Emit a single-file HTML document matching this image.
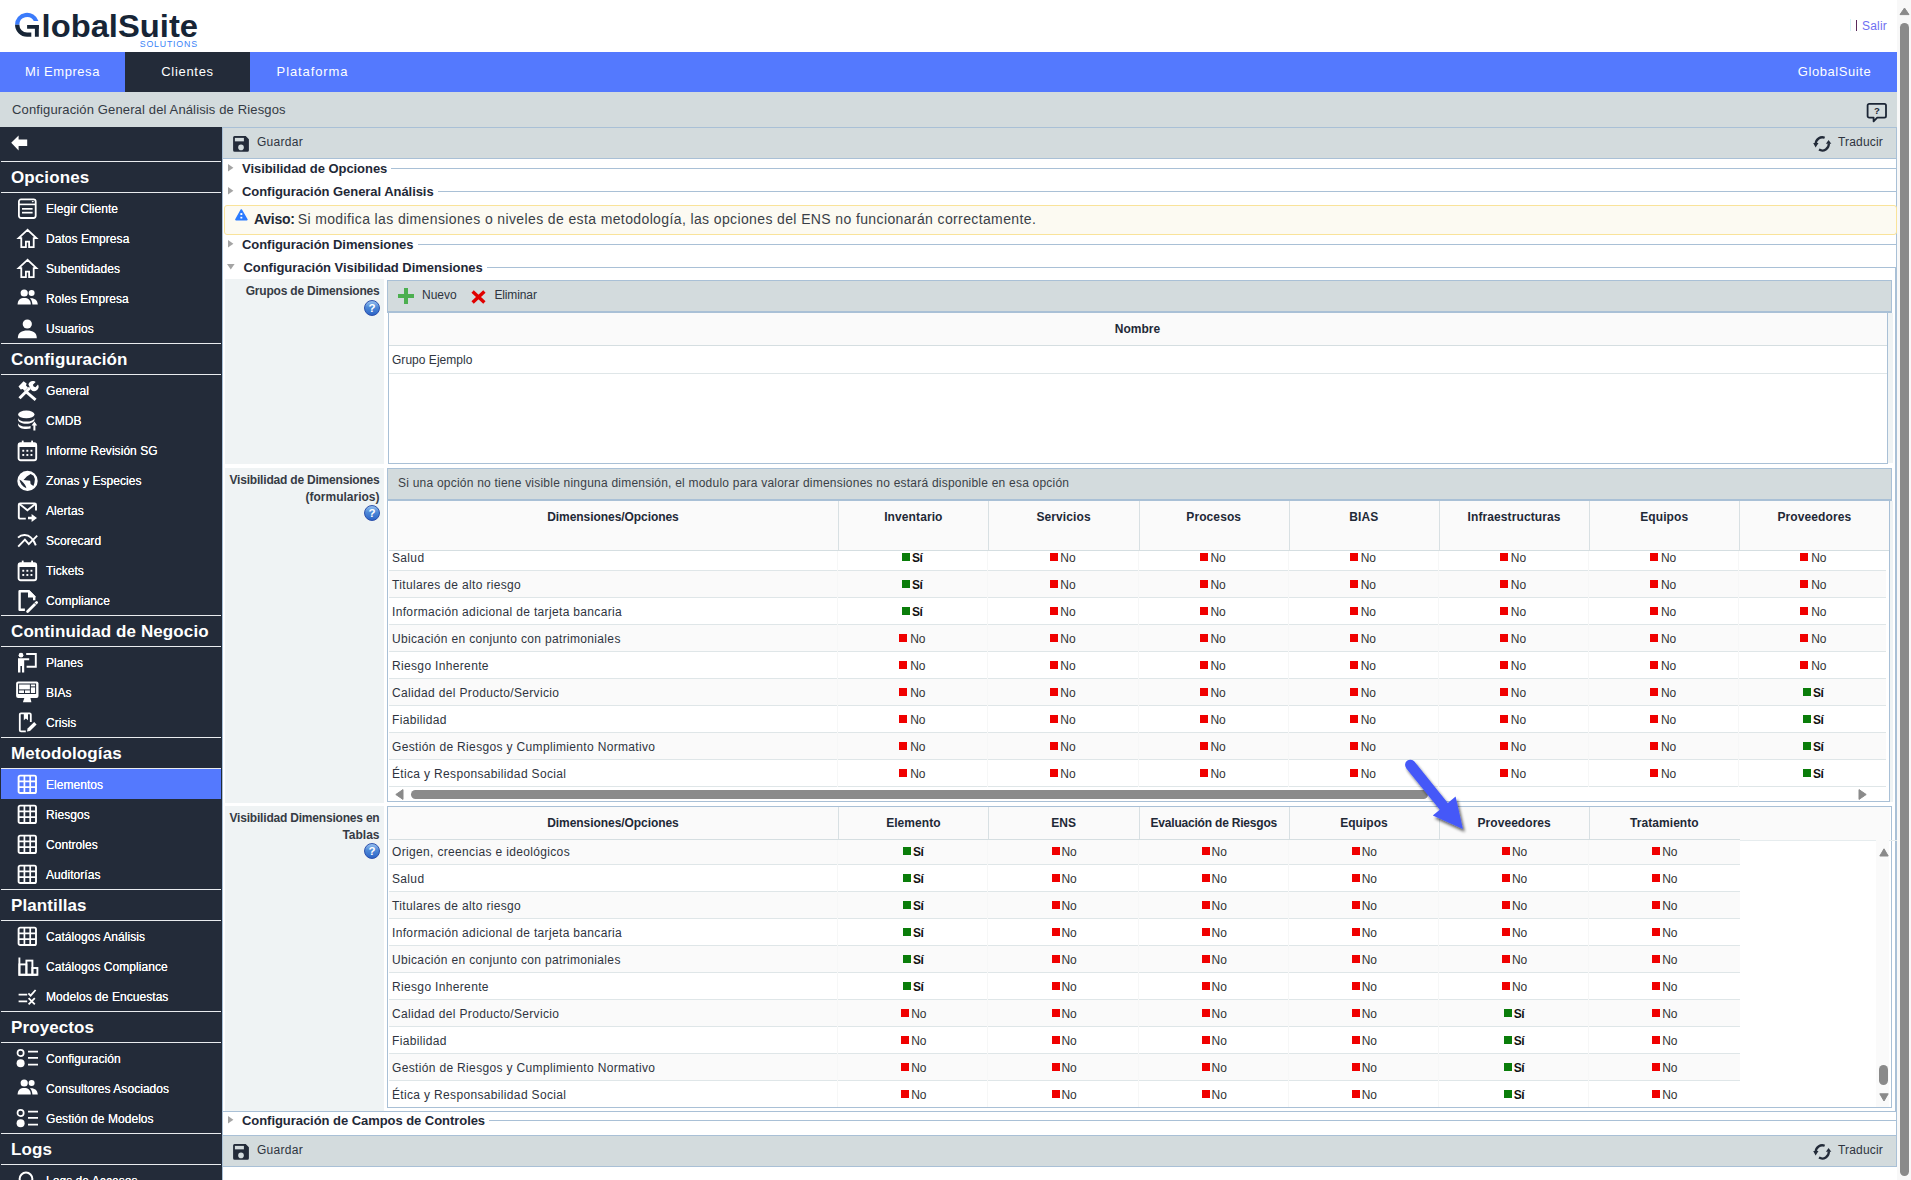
<!DOCTYPE html>
<html><head><meta charset="utf-8">
<style>
*{box-sizing:border-box;margin:0;padding:0}
html,body{width:1911px;height:1180px;overflow:hidden;background:#fff;font-family:"Liberation Sans",sans-serif}
.t{position:absolute;white-space:nowrap}
.r{position:absolute}
svg{position:absolute;overflow:visible}
</style></head><body>

<div class="r" style="left:0px;top:0px;width:1897px;height:52px;background:#fff;"></div>
<svg style="left:0;top:0" width="210" height="52" viewBox="0 0 210 52">
<path d="M15.04 24.75 A12 12 0 0 1 38.47 21.1 L33.82 21.1 A7.7 7.7 0 0 0 19.34 24.75 Z" fill="#3b7bfb"/>
<path d="M15.04 24.75 A12 12 0 0 0 27.04 36.75 L31.3 36.75 L31.3 32.45 L27.04 32.45 A7.7 7.7 0 0 1 19.34 24.75 Z" fill="#172536"/>
<rect x="27.1" y="25" width="11.7" height="3.75" fill="#172536"/>
<rect x="34.9" y="25" width="3.9" height="11.75" fill="#172536"/>
<text x="41.6" y="36.8" font-family="Liberation Sans" font-weight="bold" font-size="31" fill="#172536" textLength="156.4" lengthAdjust="spacingAndGlyphs">lobalSuite</text>
<text x="139.8" y="47.1" font-family="Liberation Sans" font-size="8.8" fill="#3a83f7" textLength="57.2" lengthAdjust="spacing">SOLUTIONS</text>
</svg>
<div class="r" style="left:1850px;top:19px;width:1px;height:12px;background:#d8f3f8;"></div>
<div class="r" style="left:1855.5px;top:19.5px;width:1.5px;height:11px;background:#5a2a5a;"></div>
<div class="t" style="left:1862.00px;top:18.14px;font-size:12px;line-height:16px;color:#6f6ff2;letter-spacing:0.2px;">Salir</div>
<div class="r" style="left:0px;top:52px;width:1897px;height:40px;background:#5479fe;"></div>
<div class="r" style="left:125px;top:52px;width:125px;height:40px;background:#232b39;"></div>
<div class="t" style="left:0.00px;top:63.00px;font-size:13px;line-height:17px;color:#fff;letter-spacing:0.56px;width:125px;text-align:center;">Mi Empresa</div>
<div class="t" style="left:125.00px;top:63.00px;font-size:13px;line-height:17px;color:#fff;letter-spacing:0.69px;width:125px;text-align:center;">Clientes</div>
<div class="t" style="left:250.00px;top:63.00px;font-size:13px;line-height:17px;color:#fff;letter-spacing:0.9px;width:125px;text-align:center;">Plataforma</div>
<div class="t" style="left:1797.80px;top:63.00px;font-size:13px;line-height:17px;color:#fff;letter-spacing:0.57px;">GlobalSuite</div>
<div class="r" style="left:0px;top:92px;width:1897px;height:35px;background:#d3dbdd;"></div>
<div class="t" style="left:12.00px;top:100.70px;font-size:13px;line-height:17px;color:#333a44;letter-spacing:0.14px;">Configuración General del Análisis de Riesgos</div>
<svg style="left:1866px;top:102px" width="21" height="21" viewBox="0 0 21 21">
<path d="M3.2 1.8h15.2a1.6 1.6 0 0 1 1.6 1.6v10.6a1.6 1.6 0 0 1-1.6 1.6h-7.2l-3.6 3.8v-3.8h-4.4a1.6 1.6 0 0 1-1.6-1.6v-10.6a1.6 1.6 0 0 1 1.6-1.6z" fill="none" stroke="#1b2535" stroke-width="1.8" stroke-linejoin="round"/>
<text x="10.8" y="12.3" font-family="Liberation Sans" font-weight="bold" font-size="9.5" fill="#1b2535" text-anchor="middle">?</text>
</svg>
<div class="r" style="left:0px;top:127px;width:222px;height:1053px;background:#232b39;"></div>
<svg style="left:11px;top:135px" width="17" height="16" viewBox="0 0 17 16"><path d="M0.2 7.8 L7.6 0.4 V4.6 H16.2 V11 H7.6 V15.4 Z" fill="#fff"/></svg>
<div class="r" style="left:1px;top:161px;width:220px;height:1px;background:#e9ecef;"></div>
<div class="t" style="left:11.00px;top:166.71px;font-size:17px;line-height:21px;color:#fff;font-weight:bold;letter-spacing:0.1px;">Opciones</div>
<div class="r" style="left:1px;top:192px;width:220px;height:1px;background:#e9ecef;"></div>
<svg style="left:17px;top:197.5px" width="21" height="21" viewBox="0 0 21 21"><rect x="1.9" y="1.4" width="16.8" height="18.6" rx="2.2" fill="none" stroke="#fff" stroke-width="1.8"/><rect x="2" y="5.6" width="16.6" height="1.6" fill="#fff"/><path d="M14.6 3.1h2.4l-1.2 1.3z" fill="#fff"/><rect x="5" y="10" width="10.6" height="1.7" fill="#fff"/><rect x="5" y="13.8" width="10.6" height="1.7" fill="#fff"/></svg>
<div class="t" style="left:46.00px;top:200.84px;font-size:12px;line-height:16px;color:#fff;letter-spacing:0.05px;text-shadow:0 0 0.3px #fff;">Elegir Cliente</div>
<svg style="left:17px;top:227.5px" width="21" height="21" viewBox="0 0 21 21"><path d="M10.5 1.8 L1.6 10.2 H4.3 V19.2 H8.9 V13.6 H12.1 V19.2 H16.7 V10.2 H19.4 Z" fill="none" stroke="#fff" stroke-width="1.8" stroke-linejoin="miter"/></svg>
<div class="t" style="left:46.00px;top:230.84px;font-size:12px;line-height:16px;color:#fff;letter-spacing:0.05px;text-shadow:0 0 0.3px #fff;">Datos Empresa</div>
<svg style="left:17px;top:257.5px" width="21" height="21" viewBox="0 0 21 21"><path d="M10.5 1.8 L1.6 10.2 H4.3 V19.2 H8.9 V13.6 H12.1 V19.2 H16.7 V10.2 H19.4 Z" fill="none" stroke="#fff" stroke-width="1.8" stroke-linejoin="miter"/></svg>
<div class="t" style="left:46.00px;top:260.84px;font-size:12px;line-height:16px;color:#fff;letter-spacing:0.05px;text-shadow:0 0 0.3px #fff;">Subentidades</div>
<svg style="left:17px;top:287.5px" width="21" height="21" viewBox="0 0 21 21"><circle cx="7.2" cy="5" r="3.6" fill="#fff"/><circle cx="14.6" cy="5" r="3" fill="#fff"/><path d="M0.6 16.6 C0.6 11.8 3.4 10 7.2 10 C11 10 13.8 11.8 13.8 16.6 Z" fill="#fff"/><path d="M12.8 10.3 C17.4 9.8 20.6 12 20.8 16.6 H15.4 C15.2 13.6 14.4 11.6 12.8 10.3 Z" fill="#fff"/></svg>
<div class="t" style="left:46.00px;top:290.84px;font-size:12px;line-height:16px;color:#fff;letter-spacing:0.05px;text-shadow:0 0 0.3px #fff;">Roles Empresa</div>
<svg style="left:17px;top:317.5px" width="21" height="21" viewBox="0 0 21 21"><circle cx="10.3" cy="6" r="4.6" fill="#fff"/><path d="M0.8 20.2 C0.8 14.6 4.8 12.6 10.3 12.6 C15.8 12.6 19.8 14.6 19.8 20.2 Z" fill="#fff"/></svg>
<div class="t" style="left:46.00px;top:320.84px;font-size:12px;line-height:16px;color:#fff;letter-spacing:0.05px;text-shadow:0 0 0.3px #fff;">Usuarios</div>
<div class="r" style="left:1px;top:343px;width:220px;height:1px;background:#e9ecef;"></div>
<div class="t" style="left:11.00px;top:348.71px;font-size:17px;line-height:21px;color:#fff;font-weight:bold;letter-spacing:0.1px;">Configuración</div>
<div class="r" style="left:1px;top:374px;width:220px;height:1px;background:#e9ecef;"></div>
<svg style="left:17px;top:379.5px" width="21" height="21" viewBox="0 0 21 21"><path d="M2.5 18.2 L13 7.7" stroke="#fff" stroke-width="3"/><path d="M11.4 4.4 A4.4 4.4 0 0 1 18.6 2 L15.9 4.7 L16.6 6.6 L18.5 7.3 L21 4.6 A4.4 4.4 0 0 1 14 9.8 Z" fill="#fff"/><path d="M8.6 11.4 L18.6 19.8" stroke="#fff" stroke-width="2.9"/><path d="M1.5 6.4 L6.6 1.3 L9.6 3.4 L9 5.6 L11 7.5 L7.6 10.9 L5.8 9 L3.7 9.6 Z" fill="#fff"/></svg>
<div class="t" style="left:46.00px;top:382.84px;font-size:12px;line-height:16px;color:#fff;letter-spacing:0.05px;text-shadow:0 0 0.3px #fff;">General</div>
<svg style="left:17px;top:409.5px" width="21" height="21" viewBox="0 0 21 21"><ellipse cx="9.3" cy="4.4" rx="8.2" ry="3.9" fill="#fff"/><path d="M1.1 7.4 C1.1 10 4.8 11.6 9.3 11.6 C13.8 11.6 17.5 10 17.5 7.4 V9.6 C17.5 12.2 13.8 13.8 9.3 13.8 C4.8 13.8 1.1 12.2 1.1 9.6 Z" fill="#fff"/><path d="M1.1 12.4 C1.1 15 4.8 16.6 9.3 16.6 C11 16.6 12.4 16.4 13.6 16 L13.6 18.6 C12.4 18.9 10.9 19.1 9.3 19.1 C4.8 19.1 1.1 17.4 1.1 14.8 Z" fill="#fff"/><path d="M17.4 11.6 L20.2 15.4 H18.4 V20.4 H16.4 V15.4 H14.6 Z" fill="#fff"/></svg>
<div class="t" style="left:46.00px;top:412.84px;font-size:12px;line-height:16px;color:#fff;letter-spacing:0.05px;text-shadow:0 0 0.3px #fff;">CMDB</div>
<svg style="left:17px;top:439.5px" width="21" height="21" viewBox="0 0 21 21"><rect x="1.6" y="3.2" width="17.6" height="17" rx="2" fill="none" stroke="#fff" stroke-width="1.9"/><rect x="1.6" y="3.2" width="17.6" height="3.8" fill="#fff"/><rect x="4.8" y="0.6" width="1.8" height="3.4" fill="#fff"/><rect x="14.2" y="0.6" width="1.8" height="3.4" fill="#fff"/><g fill="#fff"><rect x="5.3" y="9.8" width="1.9" height="1.9"/><rect x="9.4" y="9.8" width="1.9" height="1.9"/><rect x="13.5" y="9.8" width="1.9" height="1.9"/><rect x="5.3" y="14" width="1.9" height="1.9"/><rect x="9.4" y="14" width="1.9" height="1.9"/><rect x="13.5" y="14" width="1.9" height="1.9"/></g></svg>
<div class="t" style="left:46.00px;top:442.84px;font-size:12px;line-height:16px;color:#fff;letter-spacing:0.05px;text-shadow:0 0 0.3px #fff;">Informe Revisión SG</div>
<svg style="left:17px;top:469.5px" width="21" height="21" viewBox="0 0 21 21"><circle cx="10.5" cy="10.9" r="10.2" fill="#fff"/><path d="M6.5 9.9 L9.8 6.5 L13.6 3.9 L16.6 5.8 L17.9 9 L17.4 13 L16.4 16 L13.6 14.1 L13.2 10.8 Z" fill="#232b39"/><path d="M2.4 9.4 C3.2 13.2 5.4 16.4 9.4 18.2 L8.8 16.2 C7.4 13.4 5.2 11 2.4 9.4 Z" fill="#232b39"/></svg>
<div class="t" style="left:46.00px;top:472.84px;font-size:12px;line-height:16px;color:#fff;letter-spacing:0.05px;text-shadow:0 0 0.3px #fff;">Zonas y Especies</div>
<svg style="left:17px;top:499.5px" width="21" height="21" viewBox="0 0 21 21"><path d="M8.8 18.6 H3.2 Q1.8 18.6 1.8 17.2 V4.8 Q1.8 3.4 3.2 3.4 H17.6 Q19 3.4 19 4.8 V10.4" fill="none" stroke="#fff" stroke-width="1.9"/><path d="M2.2 3.8 L10.4 10.2 L18.6 3.8" fill="none" stroke="#fff" stroke-width="1.9"/><path d="M11 16.7 H14.6 V14 L20 18 L14.6 22 V19.3 H11 Z" fill="#fff"/></svg>
<div class="t" style="left:46.00px;top:502.84px;font-size:12px;line-height:16px;color:#fff;letter-spacing:0.05px;text-shadow:0 0 0.3px #fff;">Alertas</div>
<svg style="left:17px;top:529.5px" width="21" height="21" viewBox="0 0 21 21"><path d="M1 7.6 C4.4 4.4 10.4 4 14 7.6 C16.6 10 17.8 12.6 18.8 15.4" fill="none" stroke="#fff" stroke-width="1.9"/><path d="M1.2 16.6 L7.9 9.6 L11.8 14.2 L20.2 5.6" fill="none" stroke="#fff" stroke-width="1.9"/></svg>
<div class="t" style="left:46.00px;top:532.84px;font-size:12px;line-height:16px;color:#fff;letter-spacing:0.05px;text-shadow:0 0 0.3px #fff;">Scorecard</div>
<svg style="left:17px;top:559.5px" width="21" height="21" viewBox="0 0 21 21"><rect x="1.6" y="3.2" width="17.6" height="17" rx="2" fill="none" stroke="#fff" stroke-width="1.9"/><rect x="1.6" y="3.2" width="17.6" height="3.8" fill="#fff"/><rect x="4.8" y="0.6" width="1.8" height="3.4" fill="#fff"/><rect x="14.2" y="0.6" width="1.8" height="3.4" fill="#fff"/><g fill="#fff"><rect x="5.3" y="9.8" width="1.9" height="1.9"/><rect x="9.4" y="9.8" width="1.9" height="1.9"/><rect x="13.5" y="9.8" width="1.9" height="1.9"/><rect x="5.3" y="14" width="1.9" height="1.9"/><rect x="9.4" y="14" width="1.9" height="1.9"/><rect x="13.5" y="14" width="1.9" height="1.9"/></g></svg>
<div class="t" style="left:46.00px;top:562.84px;font-size:12px;line-height:16px;color:#fff;letter-spacing:0.05px;text-shadow:0 0 0.3px #fff;">Tickets</div>
<svg style="left:17px;top:589.5px" width="21" height="21" viewBox="0 0 21 21"><path d="M7.9 19.7 H2.6 V1.3 H11.7 L17.2 6.8 V10.3" fill="none" stroke="#fff" stroke-width="2.4" stroke-linejoin="round"/><path d="M11 0.1 H12.2 L18.4 6.3 V7.6 H11 Z" fill="#fff"/><path d="M10.6 21.4 L19.6 12.4" stroke="#fff" stroke-width="2.8" stroke-linecap="round"/><path d="M17 12.4 L19.4 14.8" stroke="#232b39" stroke-width="0.8"/></svg>
<div class="t" style="left:46.00px;top:592.84px;font-size:12px;line-height:16px;color:#fff;letter-spacing:0.05px;text-shadow:0 0 0.3px #fff;">Compliance</div>
<div class="r" style="left:1px;top:615px;width:220px;height:1px;background:#e9ecef;"></div>
<div class="t" style="left:11.00px;top:620.71px;font-size:17px;line-height:21px;color:#fff;font-weight:bold;letter-spacing:0.1px;">Continuidad de Negocio</div>
<div class="r" style="left:1px;top:646px;width:220px;height:1px;background:#e9ecef;"></div>
<svg style="left:17px;top:651.5px" width="21" height="21" viewBox="0 0 21 21"><circle cx="4" cy="3.2" r="2.4" fill="#fff"/><path d="M1 6.2 H12.2 V8.2 H7.2 V20.4 H5 V14 H3.4 V20.4 H1 Z" fill="#fff"/><path d="M9.2 2 H18.8 V14.8 H9.6" fill="none" stroke="#fff" stroke-width="1.9"/></svg>
<div class="t" style="left:46.00px;top:654.84px;font-size:12px;line-height:16px;color:#fff;letter-spacing:0.05px;text-shadow:0 0 0.3px #fff;">Planes</div>
<svg style="left:17px;top:681.5px" width="21" height="21" viewBox="0 0 21 21"><rect x="-0.9" y="-0.4" width="22.4" height="16.4" rx="2" fill="#fff"/><rect x="1.6" y="2" width="17" height="9.5" fill="none" stroke="#232b39" stroke-width="1"/><path d="M13.4 2 V11.5 M1.6 7.9 H13.4 M7.5 7.9 V11.5 M13.4 4.9 H18.6" stroke="#232b39" stroke-width="1"/><path d="M7.4 15.8 H13.4 L14.4 20.3 H5.9 Z" fill="#fff"/></svg>
<div class="t" style="left:46.00px;top:684.84px;font-size:12px;line-height:16px;color:#fff;letter-spacing:0.05px;text-shadow:0 0 0.3px #fff;">BIAs</div>
<svg style="left:17px;top:711.5px" width="21" height="21" viewBox="0 0 21 21"><path d="M8.8 19.4 H4 C3.2 19.4 2.8 19 2.8 18.2 V2.6 C2.8 1.8 3.2 1.4 4 1.4 H12.6 C13.4 1.4 13.8 1.8 13.8 2.6 V10" fill="none" stroke="#fff" stroke-width="1.8"/><path d="M6.8 1.6 H11 V8.2 L8.9 6.4 L6.8 8.2 Z" fill="#fff"/><path d="M10 19.6 L10.6 16.6 L17.2 10 L19.6 12.4 L13 19 Z" fill="#fff"/></svg>
<div class="t" style="left:46.00px;top:714.84px;font-size:12px;line-height:16px;color:#fff;letter-spacing:0.05px;text-shadow:0 0 0.3px #fff;">Crisis</div>
<div class="r" style="left:1px;top:737px;width:220px;height:1px;background:#e9ecef;"></div>
<div class="t" style="left:11.00px;top:742.71px;font-size:17px;line-height:21px;color:#fff;font-weight:bold;letter-spacing:0.1px;">Metodologías</div>
<div class="r" style="left:1px;top:768px;width:220px;height:1px;background:#e9ecef;"></div>
<div class="r" style="left:1px;top:769px;width:220px;height:30px;background:#5479fe;"></div>
<svg style="left:17px;top:773.5px" width="21" height="21" viewBox="0 0 21 21"><rect x="1.6" y="1.6" width="17.4" height="17.4" rx="1.6" fill="none" stroke="#fff" stroke-width="1.9"/><path d="M1.6 7.4 H19 M1.6 13.2 H19 M7.4 1.6 V19 M13.2 1.6 V19" stroke="#fff" stroke-width="1.7"/></svg>
<div class="t" style="left:46.00px;top:776.84px;font-size:12px;line-height:16px;color:#fff;letter-spacing:0.05px;text-shadow:0 0 0.3px #fff;">Elementos</div>
<svg style="left:17px;top:803.5px" width="21" height="21" viewBox="0 0 21 21"><rect x="1.6" y="1.6" width="17.4" height="17.4" rx="1.6" fill="none" stroke="#fff" stroke-width="1.9"/><path d="M1.6 7.4 H19 M1.6 13.2 H19 M7.4 1.6 V19 M13.2 1.6 V19" stroke="#fff" stroke-width="1.7"/></svg>
<div class="t" style="left:46.00px;top:806.84px;font-size:12px;line-height:16px;color:#fff;letter-spacing:0.05px;text-shadow:0 0 0.3px #fff;">Riesgos</div>
<svg style="left:17px;top:833.5px" width="21" height="21" viewBox="0 0 21 21"><rect x="1.6" y="1.6" width="17.4" height="17.4" rx="1.6" fill="none" stroke="#fff" stroke-width="1.9"/><path d="M1.6 7.4 H19 M1.6 13.2 H19 M7.4 1.6 V19 M13.2 1.6 V19" stroke="#fff" stroke-width="1.7"/></svg>
<div class="t" style="left:46.00px;top:836.84px;font-size:12px;line-height:16px;color:#fff;letter-spacing:0.05px;text-shadow:0 0 0.3px #fff;">Controles</div>
<svg style="left:17px;top:863.5px" width="21" height="21" viewBox="0 0 21 21"><rect x="1.6" y="1.6" width="17.4" height="17.4" rx="1.6" fill="none" stroke="#fff" stroke-width="1.9"/><path d="M1.6 7.4 H19 M1.6 13.2 H19 M7.4 1.6 V19 M13.2 1.6 V19" stroke="#fff" stroke-width="1.7"/></svg>
<div class="t" style="left:46.00px;top:866.84px;font-size:12px;line-height:16px;color:#fff;letter-spacing:0.05px;text-shadow:0 0 0.3px #fff;">Auditorías</div>
<div class="r" style="left:1px;top:889px;width:220px;height:1px;background:#e9ecef;"></div>
<div class="t" style="left:11.00px;top:894.71px;font-size:17px;line-height:21px;color:#fff;font-weight:bold;letter-spacing:0.1px;">Plantillas</div>
<div class="r" style="left:1px;top:920px;width:220px;height:1px;background:#e9ecef;"></div>
<svg style="left:17px;top:925.5px" width="21" height="21" viewBox="0 0 21 21"><rect x="1.6" y="1.6" width="17.4" height="17.4" rx="1.6" fill="none" stroke="#fff" stroke-width="1.9"/><path d="M1.6 7.4 H19 M1.6 13.2 H19 M7.4 1.6 V19 M13.2 1.6 V19" stroke="#fff" stroke-width="1.7"/></svg>
<div class="t" style="left:46.00px;top:928.84px;font-size:12px;line-height:16px;color:#fff;letter-spacing:0.05px;text-shadow:0 0 0.3px #fff;">Catálogos Análisis</div>
<svg style="left:17px;top:955.5px" width="21" height="21" viewBox="0 0 21 21"><path d="M2.4 1.6 V18.8 H20.4" fill="none" stroke="#fff" stroke-width="1.9"/><rect x="2.4" y="8.4" width="7" height="10.4" fill="none" stroke="#fff" stroke-width="1.9"/><rect x="9.4" y="4.6" width="6" height="14.2" fill="none" stroke="#fff" stroke-width="1.9"/><rect x="15.4" y="12" width="5" height="6.8" fill="none" stroke="#fff" stroke-width="1.9"/></svg>
<div class="t" style="left:46.00px;top:958.84px;font-size:12px;line-height:16px;color:#fff;letter-spacing:0.05px;text-shadow:0 0 0.3px #fff;">Catálogos Compliance</div>
<svg style="left:17px;top:985.5px" width="21" height="21" viewBox="0 0 21 21"><path d="M1.6 8.6 H10.2 M1.6 15.4 H10.2" stroke="#fff" stroke-width="1.8"/><path d="M11.4 7.4 L13.6 9.6 L18.6 4" fill="none" stroke="#fff" stroke-width="1.8"/><path d="M11.6 12.2 L17.8 18.4 M17.8 12.2 L11.6 18.4" stroke="#fff" stroke-width="1.8"/></svg>
<div class="t" style="left:46.00px;top:988.84px;font-size:12px;line-height:16px;color:#fff;letter-spacing:0.05px;text-shadow:0 0 0.3px #fff;">Modelos de Encuestas</div>
<div class="r" style="left:1px;top:1011px;width:220px;height:1px;background:#e9ecef;"></div>
<div class="t" style="left:11.00px;top:1016.71px;font-size:17px;line-height:21px;color:#fff;font-weight:bold;letter-spacing:0.1px;">Proyectos</div>
<div class="r" style="left:1px;top:1042px;width:220px;height:1px;background:#e9ecef;"></div>
<svg style="left:17px;top:1047.5px" width="21" height="21" viewBox="0 0 21 21"><circle cx="3.6" cy="5" r="3.1" fill="none" stroke="#fff" stroke-width="1.7"/><circle cx="3.6" cy="15.3" r="4" fill="#fff"/><path d="M11 3.6 H21 M11 9.9 H21 M11 16.6 H21" stroke="#fff" stroke-width="1.6"/></svg>
<div class="t" style="left:46.00px;top:1050.84px;font-size:12px;line-height:16px;color:#fff;letter-spacing:0.05px;text-shadow:0 0 0.3px #fff;">Configuración</div>
<svg style="left:17px;top:1077.5px" width="21" height="21" viewBox="0 0 21 21"><circle cx="7.2" cy="5" r="3.6" fill="#fff"/><circle cx="14.6" cy="5" r="3" fill="#fff"/><path d="M0.6 16.6 C0.6 11.8 3.4 10 7.2 10 C11 10 13.8 11.8 13.8 16.6 Z" fill="#fff"/><path d="M12.8 10.3 C17.4 9.8 20.6 12 20.8 16.6 H15.4 C15.2 13.6 14.4 11.6 12.8 10.3 Z" fill="#fff"/></svg>
<div class="t" style="left:46.00px;top:1080.84px;font-size:12px;line-height:16px;color:#fff;letter-spacing:0.05px;text-shadow:0 0 0.3px #fff;">Consultores Asociados</div>
<svg style="left:17px;top:1107.5px" width="21" height="21" viewBox="0 0 21 21"><circle cx="3.6" cy="5" r="3.1" fill="none" stroke="#fff" stroke-width="1.7"/><circle cx="3.6" cy="15.3" r="4" fill="#fff"/><path d="M11 3.6 H21 M11 9.9 H21 M11 16.6 H21" stroke="#fff" stroke-width="1.6"/></svg>
<div class="t" style="left:46.00px;top:1110.84px;font-size:12px;line-height:16px;color:#fff;letter-spacing:0.05px;text-shadow:0 0 0.3px #fff;">Gestión de Modelos</div>
<div class="r" style="left:1px;top:1133px;width:220px;height:1px;background:#e9ecef;"></div>
<div class="t" style="left:11.00px;top:1138.71px;font-size:17px;line-height:21px;color:#fff;font-weight:bold;letter-spacing:0.1px;">Logs</div>
<div class="r" style="left:1px;top:1164px;width:220px;height:1px;background:#e9ecef;"></div>
<svg style="left:17px;top:1169.5px" width="21" height="21" viewBox="0 0 21 21"><circle cx="9" cy="9" r="6.4" fill="none" stroke="#fff" stroke-width="2"/></svg>
<div class="t" style="left:46.00px;top:1172.84px;font-size:12px;line-height:16px;color:#fff;letter-spacing:0.05px;text-shadow:0 0 0.3px #fff;">Logs de Accesos</div>
<div class="r" style="left:222px;top:127px;width:1675px;height:1053px;background:#fff;"></div>
<div class="r" style="left:222px;top:127px;width:1px;height:1053px;background:#a9c0d6;"></div>
<div class="r" style="left:1896px;top:159px;width:1px;height:976px;background:#a9c0d6;"></div>
<div class="r" style="left:222px;top:127px;width:1675px;height:32px;background:#d3dbdd;border-top:1px solid #a9c0d6;border-bottom:1px solid #a9c0d6;border-right:1px solid #a9c0d6;border-left:1px solid #a9c0d6;"></div>
<svg style="left:233px;top:136px" width="17" height="17" viewBox="0 0 17 17"><path d="M1.5 0.1 H12.7 L15.9 3.2 V14.3 A1.5 1.5 0 0 1 14.4 15.8 H1.6 A1.5 1.5 0 0 1 0.1 14.3 V1.6 A1.5 1.5 0 0 1 1.5 0.1 Z" fill="#232b39"/><rect x="1.9" y="1.9" width="9" height="3.45" fill="#d3dbdd"/><circle cx="8" cy="11.4" r="2.8" fill="#d3dbdd"/></svg>
<div class="t" style="left:257.00px;top:134.04px;font-size:12px;line-height:16px;color:#2e3440;letter-spacing:0.28px;">Guardar</div>
<svg style="left:1813px;top:135.5px" width="19" height="16" viewBox="0 0 19 16"><path d="M2.7 7.9 A6.6 6.6 0 0 1 11.67 1.74" fill="none" stroke="#232b39" stroke-width="2.3"/><path d="M0.2 7.1 L5.5 7.1 L2.6 11.6 Z" fill="#232b39"/><path d="M6.0 13.6 A6.6 6.6 0 0 0 15.85 7.4" fill="none" stroke="#232b39" stroke-width="2.3"/><path d="M12.9 7.8 L18.3 7.8 L15.6 3.9 Z" fill="#232b39"/></svg>
<div class="t" style="left:1838.00px;top:134.04px;font-size:12px;line-height:16px;color:#2e3440;letter-spacing:0.18px;">Traducir</div>
<div class="r" style="left:223px;top:168px;width:1674px;height:1px;background:#a9c0d6;"></div>
<div class="r" style="left:223px;top:161px;width:168px;height:15px;background:#fff;"></div>
<svg style="left:228px;top:164px" width="6" height="8" viewBox="0 0 6 8"><path d="M0 0 V7.6 L5.4 3.8 Z" fill="#a4a4a4"/></svg>
<div class="t" style="left:242.00px;top:160.00px;font-size:13px;line-height:17px;color:#1f2937;font-weight:bold;letter-spacing:-0.05px;">Visibilidad de Opciones</div>
<div class="r" style="left:223px;top:191px;width:1674px;height:1px;background:#a9c0d6;"></div>
<div class="r" style="left:223px;top:184px;width:215px;height:15px;background:#fff;"></div>
<svg style="left:228px;top:187px" width="6" height="8" viewBox="0 0 6 8"><path d="M0 0 V7.6 L5.4 3.8 Z" fill="#a4a4a4"/></svg>
<div class="t" style="left:242.00px;top:183.00px;font-size:13px;line-height:17px;color:#1f2937;font-weight:bold;letter-spacing:-0.05px;">Configuración General Análisis</div>
<div class="r" style="left:223.5px;top:205px;width:1673px;height:29.5px;background:#fcfaf2;border:1px solid #f9e39a;border-radius:3px;"></div>
<svg style="left:234.5px;top:209px" width="13" height="12" viewBox="0 0 13 12"><path d="M6.3 1 L11.9 10.6 H0.9 Z" fill="#2b7bff" stroke="#2b7bff" stroke-width="1.6" stroke-linejoin="round"/><rect x="5.4" y="4.1" width="1.9" height="1.9" fill="#fff"/><rect x="5.4" y="7.8" width="1.9" height="1.7" fill="#fff"/></svg>
<div class="t" style="left:254.00px;top:210.15px;font-size:14px;line-height:18px;color:#1f2937;font-weight:bold;letter-spacing:-0.27px;">Aviso:</div>
<div class="t" style="left:297.70px;top:210.15px;font-size:14px;line-height:18px;color:#3a3f47;letter-spacing:0.378px;">Si modifica las dimensiones o niveles de esta metodología, las opciones del ENS no funcionarán correctamente.</div>
<div class="r" style="left:223px;top:244px;width:1674px;height:1px;background:#a9c0d6;"></div>
<div class="r" style="left:223px;top:237px;width:195px;height:15px;background:#fff;"></div>
<svg style="left:228px;top:240px" width="6" height="8" viewBox="0 0 6 8"><path d="M0 0 V7.6 L5.4 3.8 Z" fill="#a4a4a4"/></svg>
<div class="t" style="left:242.00px;top:236.00px;font-size:13px;line-height:17px;color:#1f2937;font-weight:bold;letter-spacing:-0.05px;">Configuración Dimensiones</div>
<div class="r" style="left:223px;top:267px;width:1674px;height:1px;background:#a9c0d6;"></div>
<div class="r" style="left:223px;top:260px;width:264px;height:15px;background:#fff;"></div>
<svg style="left:227px;top:264px" width="8" height="6" viewBox="0 0 8 6"><path d="M0 0 H7.6 L3.8 5.4 Z" fill="#a4a4a4"/></svg>
<div class="t" style="left:243.50px;top:259.40px;font-size:13px;line-height:17px;color:#1f2937;font-weight:bold;letter-spacing:-0.05px;">Configuración Visibilidad Dimensiones</div>
<div class="r" style="left:1895px;top:268px;width:1px;height:843px;background:#a9c0d6;"></div>
<div class="r" style="left:223px;top:1111px;width:1673px;height:1px;background:#a9c0d6;"></div>
<div class="r" style="left:225px;top:279px;width:159px;height:184.5px;background:#eff3f4;"></div>
<div class="t" style="left:179.50px;top:282.84px;font-size:12px;line-height:16px;color:#363b44;font-weight:bold;letter-spacing:-0.2px;width:200px;text-align:right;">Grupos de Dimensiones</div>
<svg style="left:364px;top:300px" width="16" height="16" viewBox="0 0 16 16"><defs><linearGradient id="hg364300" x1="0" y1="0" x2="0" y2="1"><stop offset="0" stop-color="#9cc4f2"/><stop offset="0.45" stop-color="#4f8ad8"/><stop offset="1" stop-color="#2a62c6"/></linearGradient></defs><circle cx="8" cy="8" r="7.5" fill="url(#hg364300)" stroke="#2447a6" stroke-width="0.9"/><text x="8" y="12.3" font-family="Liberation Sans" font-weight="bold" font-size="11.5" fill="#fff" text-anchor="middle">?</text></svg>
<div class="r" style="left:387px;top:280px;width:1505px;height:33px;background:#d3dbdd;border:1px solid #a9c0d6;border-bottom:2px solid #a9c0d6;"></div>
<svg style="left:398px;top:288px" width="16" height="16" viewBox="0 0 16 16"><path d="M6 0 H10 V6 H16 V10 H10 V16 H6 V10 H0 V6 H6 Z" fill="#4caf50"/></svg>
<div class="t" style="left:422.00px;top:287.04px;font-size:12px;line-height:16px;color:#2e3440;">Nuevo</div>
<svg style="left:471px;top:290px" width="15" height="14" viewBox="0 0 15 14"><path d="M1.6 1.6 L13.4 12.6 M13.4 1.6 L1.6 12.6" stroke="#e00000" stroke-width="3.4"/></svg>
<div class="t" style="left:494.40px;top:287.04px;font-size:12px;line-height:16px;color:#2e3440;letter-spacing:-0.12px;">Eliminar</div>
<div class="r" style="left:1888px;top:313px;width:5px;height:150px;background:#eff3f4;"></div>
<div class="r" style="left:388px;top:313px;width:1500px;height:150.5px;background:#fff;border-left:1px solid #a9c0d6;border-right:1px solid #a9c0d6;border-bottom:1px solid #a9c0d6;"></div>
<div class="r" style="left:389px;top:313px;width:1498px;height:32.5px;background:#fafafa;"></div>
<div class="r" style="left:389px;top:345px;width:1498px;height:1px;background:#d5dee1;"></div>
<div class="t" style="left:1037.50px;top:320.84px;font-size:12px;line-height:16px;color:#1f2937;font-weight:bold;width:200px;text-align:center;">Nombre</div>
<div class="t" style="left:392.00px;top:352.44px;font-size:12px;line-height:16px;color:#2e3440;letter-spacing:0.03px;">Grupo Ejemplo</div>
<div class="r" style="left:389px;top:373px;width:1498px;height:1px;background:#dfe6e8;"></div>
<div class="r" style="left:225px;top:467.5px;width:159px;height:335px;background:#eff3f4;"></div>
<div class="t" style="left:179.50px;top:471.84px;font-size:12px;line-height:16px;color:#363b44;font-weight:bold;letter-spacing:-0.2px;width:200px;text-align:right;">Visibilidad de Dimensiones</div>
<div class="t" style="left:179.50px;top:488.84px;font-size:12px;line-height:16px;color:#363b44;font-weight:bold;width:200px;text-align:right;">(formularios)</div>
<svg style="left:364px;top:505px" width="16" height="16" viewBox="0 0 16 16"><defs><linearGradient id="hg364505" x1="0" y1="0" x2="0" y2="1"><stop offset="0" stop-color="#9cc4f2"/><stop offset="0.45" stop-color="#4f8ad8"/><stop offset="1" stop-color="#2a62c6"/></linearGradient></defs><circle cx="8" cy="8" r="7.5" fill="url(#hg364505)" stroke="#2447a6" stroke-width="0.9"/><text x="8" y="12.3" font-family="Liberation Sans" font-weight="bold" font-size="11.5" fill="#fff" text-anchor="middle">?</text></svg>
<div class="r" style="left:387px;top:468px;width:1505px;height:33px;background:#d3dbdd;border:1px solid #a9c0d6;border-bottom:2px solid #a9c0d6;"></div>
<div class="t" style="left:398.00px;top:475.44px;font-size:12px;line-height:16px;color:#3a3f47;letter-spacing:0.22px;">Si una opción no tiene visible ninguna dimensión, el modulo para valorar dimensiones no estará disponible en esa opción</div>
<div class="r" style="left:1890px;top:501px;width:3px;height:301px;background:#eff3f4;"></div>
<div class="r" style="left:387px;top:501px;width:1503px;height:301px;background:#fff;border-left:1px solid #a9c0d6;border-right:1px solid #a9c0d6;border-bottom:1px solid #a9c0d6;"></div>
<div class="r" style="left:389px;top:501px;width:1500px;height:49.5px;background:#fafafa;"></div>
<div class="t" style="left:463.00px;top:509.24px;font-size:12px;line-height:16px;color:#1f2937;font-weight:bold;letter-spacing:-0.06px;width:300px;text-align:center;">Dimensiones/Opciones</div>
<div class="r" style="left:838px;top:501px;width:1px;height:49.5px;background:#d8e0e3;"></div>
<div class="t" style="left:838.30px;top:509.24px;font-size:12px;line-height:16px;color:#1f2937;font-weight:bold;letter-spacing:0.1px;width:150.17px;text-align:center;">Inventario</div>
<div class="r" style="left:988px;top:501px;width:1px;height:49.5px;background:#d8e0e3;"></div>
<div class="t" style="left:988.47px;top:509.24px;font-size:12px;line-height:16px;color:#1f2937;font-weight:bold;letter-spacing:0.1px;width:150.17px;text-align:center;">Servicios</div>
<div class="r" style="left:1139px;top:501px;width:1px;height:49.5px;background:#d8e0e3;"></div>
<div class="t" style="left:1138.64px;top:509.24px;font-size:12px;line-height:16px;color:#1f2937;font-weight:bold;letter-spacing:0.1px;width:150.17px;text-align:center;">Procesos</div>
<div class="r" style="left:1289px;top:501px;width:1px;height:49.5px;background:#d8e0e3;"></div>
<div class="t" style="left:1288.81px;top:509.24px;font-size:12px;line-height:16px;color:#1f2937;font-weight:bold;letter-spacing:0.1px;width:150.17px;text-align:center;">BIAS</div>
<div class="r" style="left:1439px;top:501px;width:1px;height:49.5px;background:#d8e0e3;"></div>
<div class="t" style="left:1438.98px;top:509.24px;font-size:12px;line-height:16px;color:#1f2937;font-weight:bold;letter-spacing:0.1px;width:150.17px;text-align:center;">Infraestructuras</div>
<div class="r" style="left:1589px;top:501px;width:1px;height:49.5px;background:#d8e0e3;"></div>
<div class="t" style="left:1589.15px;top:509.24px;font-size:12px;line-height:16px;color:#1f2937;font-weight:bold;letter-spacing:0.1px;width:150.17px;text-align:center;">Equipos</div>
<div class="r" style="left:1739px;top:501px;width:1px;height:49.5px;background:#d8e0e3;"></div>
<div class="t" style="left:1739.32px;top:509.24px;font-size:12px;line-height:16px;color:#1f2937;font-weight:bold;letter-spacing:0.1px;width:150.17px;text-align:center;">Proveedores</div>
<div class="r" style="left:389px;top:550px;width:1500px;height:1px;background:#d5dee1;"></div>
<div class="r" style="left:389px;top:551px;width:1497px;height:19.5px;background:#fff;"></div>
<div class="r" style="left:389px;top:570.5px;width:1497px;height:27.0px;background:#fafafa;"></div>
<div class="r" style="left:389px;top:597.5px;width:1497px;height:27.0px;background:#fff;"></div>
<div class="r" style="left:389px;top:624.5px;width:1497px;height:27.0px;background:#fafafa;"></div>
<div class="r" style="left:389px;top:651.5px;width:1497px;height:27.0px;background:#fff;"></div>
<div class="r" style="left:389px;top:678.5px;width:1497px;height:27.0px;background:#fafafa;"></div>
<div class="r" style="left:389px;top:705.5px;width:1497px;height:27.0px;background:#fff;"></div>
<div class="r" style="left:389px;top:732.5px;width:1497px;height:27.0px;background:#fafafa;"></div>
<div class="r" style="left:389px;top:759.5px;width:1497px;height:27.0px;background:#fff;"></div>
<div class="r" style="left:389px;top:570px;width:1497px;height:1px;background:#dfe6e8;"></div>
<div class="t" style="left:392.00px;top:549.84px;font-size:12px;line-height:16px;color:#2e3440;letter-spacing:0.34px;">Salud</div>
<div class="r" style="left:837px;top:551px;width:1px;height:19.5px;background:#f6f7f7;"></div>
<div class="r" style="left:902px;top:553.3px;width:8px;height:8px;background:#0a7d0a;"></div>
<div class="t" style="left:911.88px;top:549.84px;font-size:12px;line-height:16px;color:#111;font-weight:bold;letter-spacing:-0.5px;">Sí</div>
<div class="r" style="left:987px;top:551px;width:1px;height:19.5px;background:#f6f7f7;"></div>
<div class="r" style="left:1050px;top:553.3px;width:8px;height:8px;background:#f00000;"></div>
<div class="t" style="left:1060.35px;top:549.84px;font-size:12px;line-height:16px;color:#333;letter-spacing:-0.1px;">No</div>
<div class="r" style="left:1138px;top:551px;width:1px;height:19.5px;background:#f6f7f7;"></div>
<div class="r" style="left:1200px;top:553.3px;width:8px;height:8px;background:#f00000;"></div>
<div class="t" style="left:1210.52px;top:549.84px;font-size:12px;line-height:16px;color:#333;letter-spacing:-0.1px;">No</div>
<div class="r" style="left:1288px;top:551px;width:1px;height:19.5px;background:#f6f7f7;"></div>
<div class="r" style="left:1350px;top:553.3px;width:8px;height:8px;background:#f00000;"></div>
<div class="t" style="left:1360.69px;top:549.84px;font-size:12px;line-height:16px;color:#333;letter-spacing:-0.1px;">No</div>
<div class="r" style="left:1438px;top:551px;width:1px;height:19.5px;background:#f6f7f7;"></div>
<div class="r" style="left:1500px;top:553.3px;width:8px;height:8px;background:#f00000;"></div>
<div class="t" style="left:1510.87px;top:549.84px;font-size:12px;line-height:16px;color:#333;letter-spacing:-0.1px;">No</div>
<div class="r" style="left:1588px;top:551px;width:1px;height:19.5px;background:#f6f7f7;"></div>
<div class="r" style="left:1650px;top:553.3px;width:8px;height:8px;background:#f00000;"></div>
<div class="t" style="left:1661.03px;top:549.84px;font-size:12px;line-height:16px;color:#333;letter-spacing:-0.1px;">No</div>
<div class="r" style="left:1738px;top:551px;width:1px;height:19.5px;background:#f6f7f7;"></div>
<div class="r" style="left:1800px;top:553.3px;width:8px;height:8px;background:#f00000;"></div>
<div class="t" style="left:1811.20px;top:549.84px;font-size:12px;line-height:16px;color:#333;letter-spacing:-0.1px;">No</div>
<div class="r" style="left:389px;top:597px;width:1497px;height:1px;background:#dfe6e8;"></div>
<div class="t" style="left:392.00px;top:576.84px;font-size:12px;line-height:16px;color:#2e3440;letter-spacing:0.34px;">Titulares de alto riesgo</div>
<div class="r" style="left:837px;top:570.5px;width:1px;height:27.0px;background:#f6f7f7;"></div>
<div class="r" style="left:902px;top:580.3px;width:8px;height:8px;background:#0a7d0a;"></div>
<div class="t" style="left:911.88px;top:576.84px;font-size:12px;line-height:16px;color:#111;font-weight:bold;letter-spacing:-0.5px;">Sí</div>
<div class="r" style="left:987px;top:570.5px;width:1px;height:27.0px;background:#f6f7f7;"></div>
<div class="r" style="left:1050px;top:580.3px;width:8px;height:8px;background:#f00000;"></div>
<div class="t" style="left:1060.35px;top:576.84px;font-size:12px;line-height:16px;color:#333;letter-spacing:-0.1px;">No</div>
<div class="r" style="left:1138px;top:570.5px;width:1px;height:27.0px;background:#f6f7f7;"></div>
<div class="r" style="left:1200px;top:580.3px;width:8px;height:8px;background:#f00000;"></div>
<div class="t" style="left:1210.52px;top:576.84px;font-size:12px;line-height:16px;color:#333;letter-spacing:-0.1px;">No</div>
<div class="r" style="left:1288px;top:570.5px;width:1px;height:27.0px;background:#f6f7f7;"></div>
<div class="r" style="left:1350px;top:580.3px;width:8px;height:8px;background:#f00000;"></div>
<div class="t" style="left:1360.69px;top:576.84px;font-size:12px;line-height:16px;color:#333;letter-spacing:-0.1px;">No</div>
<div class="r" style="left:1438px;top:570.5px;width:1px;height:27.0px;background:#f6f7f7;"></div>
<div class="r" style="left:1500px;top:580.3px;width:8px;height:8px;background:#f00000;"></div>
<div class="t" style="left:1510.87px;top:576.84px;font-size:12px;line-height:16px;color:#333;letter-spacing:-0.1px;">No</div>
<div class="r" style="left:1588px;top:570.5px;width:1px;height:27.0px;background:#f6f7f7;"></div>
<div class="r" style="left:1650px;top:580.3px;width:8px;height:8px;background:#f00000;"></div>
<div class="t" style="left:1661.03px;top:576.84px;font-size:12px;line-height:16px;color:#333;letter-spacing:-0.1px;">No</div>
<div class="r" style="left:1738px;top:570.5px;width:1px;height:27.0px;background:#f6f7f7;"></div>
<div class="r" style="left:1800px;top:580.3px;width:8px;height:8px;background:#f00000;"></div>
<div class="t" style="left:1811.20px;top:576.84px;font-size:12px;line-height:16px;color:#333;letter-spacing:-0.1px;">No</div>
<div class="r" style="left:389px;top:624px;width:1497px;height:1px;background:#dfe6e8;"></div>
<div class="t" style="left:392.00px;top:603.84px;font-size:12px;line-height:16px;color:#2e3440;letter-spacing:0.34px;">Información adicional de tarjeta bancaria</div>
<div class="r" style="left:837px;top:597.5px;width:1px;height:27.0px;background:#f6f7f7;"></div>
<div class="r" style="left:902px;top:607.3px;width:8px;height:8px;background:#0a7d0a;"></div>
<div class="t" style="left:911.88px;top:603.84px;font-size:12px;line-height:16px;color:#111;font-weight:bold;letter-spacing:-0.5px;">Sí</div>
<div class="r" style="left:987px;top:597.5px;width:1px;height:27.0px;background:#f6f7f7;"></div>
<div class="r" style="left:1050px;top:607.3px;width:8px;height:8px;background:#f00000;"></div>
<div class="t" style="left:1060.35px;top:603.84px;font-size:12px;line-height:16px;color:#333;letter-spacing:-0.1px;">No</div>
<div class="r" style="left:1138px;top:597.5px;width:1px;height:27.0px;background:#f6f7f7;"></div>
<div class="r" style="left:1200px;top:607.3px;width:8px;height:8px;background:#f00000;"></div>
<div class="t" style="left:1210.52px;top:603.84px;font-size:12px;line-height:16px;color:#333;letter-spacing:-0.1px;">No</div>
<div class="r" style="left:1288px;top:597.5px;width:1px;height:27.0px;background:#f6f7f7;"></div>
<div class="r" style="left:1350px;top:607.3px;width:8px;height:8px;background:#f00000;"></div>
<div class="t" style="left:1360.69px;top:603.84px;font-size:12px;line-height:16px;color:#333;letter-spacing:-0.1px;">No</div>
<div class="r" style="left:1438px;top:597.5px;width:1px;height:27.0px;background:#f6f7f7;"></div>
<div class="r" style="left:1500px;top:607.3px;width:8px;height:8px;background:#f00000;"></div>
<div class="t" style="left:1510.87px;top:603.84px;font-size:12px;line-height:16px;color:#333;letter-spacing:-0.1px;">No</div>
<div class="r" style="left:1588px;top:597.5px;width:1px;height:27.0px;background:#f6f7f7;"></div>
<div class="r" style="left:1650px;top:607.3px;width:8px;height:8px;background:#f00000;"></div>
<div class="t" style="left:1661.03px;top:603.84px;font-size:12px;line-height:16px;color:#333;letter-spacing:-0.1px;">No</div>
<div class="r" style="left:1738px;top:597.5px;width:1px;height:27.0px;background:#f6f7f7;"></div>
<div class="r" style="left:1800px;top:607.3px;width:8px;height:8px;background:#f00000;"></div>
<div class="t" style="left:1811.20px;top:603.84px;font-size:12px;line-height:16px;color:#333;letter-spacing:-0.1px;">No</div>
<div class="r" style="left:389px;top:651px;width:1497px;height:1px;background:#dfe6e8;"></div>
<div class="t" style="left:392.00px;top:630.84px;font-size:12px;line-height:16px;color:#2e3440;letter-spacing:0.34px;">Ubicación en conjunto con patrimoniales</div>
<div class="r" style="left:837px;top:624.5px;width:1px;height:27.0px;background:#f6f7f7;"></div>
<div class="r" style="left:899px;top:634.3px;width:8px;height:8px;background:#f00000;"></div>
<div class="t" style="left:910.18px;top:630.84px;font-size:12px;line-height:16px;color:#333;letter-spacing:-0.1px;">No</div>
<div class="r" style="left:987px;top:624.5px;width:1px;height:27.0px;background:#f6f7f7;"></div>
<div class="r" style="left:1050px;top:634.3px;width:8px;height:8px;background:#f00000;"></div>
<div class="t" style="left:1060.35px;top:630.84px;font-size:12px;line-height:16px;color:#333;letter-spacing:-0.1px;">No</div>
<div class="r" style="left:1138px;top:624.5px;width:1px;height:27.0px;background:#f6f7f7;"></div>
<div class="r" style="left:1200px;top:634.3px;width:8px;height:8px;background:#f00000;"></div>
<div class="t" style="left:1210.52px;top:630.84px;font-size:12px;line-height:16px;color:#333;letter-spacing:-0.1px;">No</div>
<div class="r" style="left:1288px;top:624.5px;width:1px;height:27.0px;background:#f6f7f7;"></div>
<div class="r" style="left:1350px;top:634.3px;width:8px;height:8px;background:#f00000;"></div>
<div class="t" style="left:1360.69px;top:630.84px;font-size:12px;line-height:16px;color:#333;letter-spacing:-0.1px;">No</div>
<div class="r" style="left:1438px;top:624.5px;width:1px;height:27.0px;background:#f6f7f7;"></div>
<div class="r" style="left:1500px;top:634.3px;width:8px;height:8px;background:#f00000;"></div>
<div class="t" style="left:1510.87px;top:630.84px;font-size:12px;line-height:16px;color:#333;letter-spacing:-0.1px;">No</div>
<div class="r" style="left:1588px;top:624.5px;width:1px;height:27.0px;background:#f6f7f7;"></div>
<div class="r" style="left:1650px;top:634.3px;width:8px;height:8px;background:#f00000;"></div>
<div class="t" style="left:1661.03px;top:630.84px;font-size:12px;line-height:16px;color:#333;letter-spacing:-0.1px;">No</div>
<div class="r" style="left:1738px;top:624.5px;width:1px;height:27.0px;background:#f6f7f7;"></div>
<div class="r" style="left:1800px;top:634.3px;width:8px;height:8px;background:#f00000;"></div>
<div class="t" style="left:1811.20px;top:630.84px;font-size:12px;line-height:16px;color:#333;letter-spacing:-0.1px;">No</div>
<div class="r" style="left:389px;top:678px;width:1497px;height:1px;background:#dfe6e8;"></div>
<div class="t" style="left:392.00px;top:657.84px;font-size:12px;line-height:16px;color:#2e3440;letter-spacing:0.34px;">Riesgo Inherente</div>
<div class="r" style="left:837px;top:651.5px;width:1px;height:27.0px;background:#f6f7f7;"></div>
<div class="r" style="left:899px;top:661.3px;width:8px;height:8px;background:#f00000;"></div>
<div class="t" style="left:910.18px;top:657.84px;font-size:12px;line-height:16px;color:#333;letter-spacing:-0.1px;">No</div>
<div class="r" style="left:987px;top:651.5px;width:1px;height:27.0px;background:#f6f7f7;"></div>
<div class="r" style="left:1050px;top:661.3px;width:8px;height:8px;background:#f00000;"></div>
<div class="t" style="left:1060.35px;top:657.84px;font-size:12px;line-height:16px;color:#333;letter-spacing:-0.1px;">No</div>
<div class="r" style="left:1138px;top:651.5px;width:1px;height:27.0px;background:#f6f7f7;"></div>
<div class="r" style="left:1200px;top:661.3px;width:8px;height:8px;background:#f00000;"></div>
<div class="t" style="left:1210.52px;top:657.84px;font-size:12px;line-height:16px;color:#333;letter-spacing:-0.1px;">No</div>
<div class="r" style="left:1288px;top:651.5px;width:1px;height:27.0px;background:#f6f7f7;"></div>
<div class="r" style="left:1350px;top:661.3px;width:8px;height:8px;background:#f00000;"></div>
<div class="t" style="left:1360.69px;top:657.84px;font-size:12px;line-height:16px;color:#333;letter-spacing:-0.1px;">No</div>
<div class="r" style="left:1438px;top:651.5px;width:1px;height:27.0px;background:#f6f7f7;"></div>
<div class="r" style="left:1500px;top:661.3px;width:8px;height:8px;background:#f00000;"></div>
<div class="t" style="left:1510.87px;top:657.84px;font-size:12px;line-height:16px;color:#333;letter-spacing:-0.1px;">No</div>
<div class="r" style="left:1588px;top:651.5px;width:1px;height:27.0px;background:#f6f7f7;"></div>
<div class="r" style="left:1650px;top:661.3px;width:8px;height:8px;background:#f00000;"></div>
<div class="t" style="left:1661.03px;top:657.84px;font-size:12px;line-height:16px;color:#333;letter-spacing:-0.1px;">No</div>
<div class="r" style="left:1738px;top:651.5px;width:1px;height:27.0px;background:#f6f7f7;"></div>
<div class="r" style="left:1800px;top:661.3px;width:8px;height:8px;background:#f00000;"></div>
<div class="t" style="left:1811.20px;top:657.84px;font-size:12px;line-height:16px;color:#333;letter-spacing:-0.1px;">No</div>
<div class="r" style="left:389px;top:705px;width:1497px;height:1px;background:#dfe6e8;"></div>
<div class="t" style="left:392.00px;top:684.84px;font-size:12px;line-height:16px;color:#2e3440;letter-spacing:0.34px;">Calidad del Producto/Servicio</div>
<div class="r" style="left:837px;top:678.5px;width:1px;height:27.0px;background:#f6f7f7;"></div>
<div class="r" style="left:899px;top:688.3px;width:8px;height:8px;background:#f00000;"></div>
<div class="t" style="left:910.18px;top:684.84px;font-size:12px;line-height:16px;color:#333;letter-spacing:-0.1px;">No</div>
<div class="r" style="left:987px;top:678.5px;width:1px;height:27.0px;background:#f6f7f7;"></div>
<div class="r" style="left:1050px;top:688.3px;width:8px;height:8px;background:#f00000;"></div>
<div class="t" style="left:1060.35px;top:684.84px;font-size:12px;line-height:16px;color:#333;letter-spacing:-0.1px;">No</div>
<div class="r" style="left:1138px;top:678.5px;width:1px;height:27.0px;background:#f6f7f7;"></div>
<div class="r" style="left:1200px;top:688.3px;width:8px;height:8px;background:#f00000;"></div>
<div class="t" style="left:1210.52px;top:684.84px;font-size:12px;line-height:16px;color:#333;letter-spacing:-0.1px;">No</div>
<div class="r" style="left:1288px;top:678.5px;width:1px;height:27.0px;background:#f6f7f7;"></div>
<div class="r" style="left:1350px;top:688.3px;width:8px;height:8px;background:#f00000;"></div>
<div class="t" style="left:1360.69px;top:684.84px;font-size:12px;line-height:16px;color:#333;letter-spacing:-0.1px;">No</div>
<div class="r" style="left:1438px;top:678.5px;width:1px;height:27.0px;background:#f6f7f7;"></div>
<div class="r" style="left:1500px;top:688.3px;width:8px;height:8px;background:#f00000;"></div>
<div class="t" style="left:1510.87px;top:684.84px;font-size:12px;line-height:16px;color:#333;letter-spacing:-0.1px;">No</div>
<div class="r" style="left:1588px;top:678.5px;width:1px;height:27.0px;background:#f6f7f7;"></div>
<div class="r" style="left:1650px;top:688.3px;width:8px;height:8px;background:#f00000;"></div>
<div class="t" style="left:1661.03px;top:684.84px;font-size:12px;line-height:16px;color:#333;letter-spacing:-0.1px;">No</div>
<div class="r" style="left:1738px;top:678.5px;width:1px;height:27.0px;background:#f6f7f7;"></div>
<div class="r" style="left:1803px;top:688.3px;width:8px;height:8px;background:#0a7d0a;"></div>
<div class="t" style="left:1812.90px;top:684.84px;font-size:12px;line-height:16px;color:#111;font-weight:bold;letter-spacing:-0.5px;">Sí</div>
<div class="r" style="left:389px;top:732px;width:1497px;height:1px;background:#dfe6e8;"></div>
<div class="t" style="left:392.00px;top:711.84px;font-size:12px;line-height:16px;color:#2e3440;letter-spacing:0.34px;">Fiabilidad</div>
<div class="r" style="left:837px;top:705.5px;width:1px;height:27.0px;background:#f6f7f7;"></div>
<div class="r" style="left:899px;top:715.3px;width:8px;height:8px;background:#f00000;"></div>
<div class="t" style="left:910.18px;top:711.84px;font-size:12px;line-height:16px;color:#333;letter-spacing:-0.1px;">No</div>
<div class="r" style="left:987px;top:705.5px;width:1px;height:27.0px;background:#f6f7f7;"></div>
<div class="r" style="left:1050px;top:715.3px;width:8px;height:8px;background:#f00000;"></div>
<div class="t" style="left:1060.35px;top:711.84px;font-size:12px;line-height:16px;color:#333;letter-spacing:-0.1px;">No</div>
<div class="r" style="left:1138px;top:705.5px;width:1px;height:27.0px;background:#f6f7f7;"></div>
<div class="r" style="left:1200px;top:715.3px;width:8px;height:8px;background:#f00000;"></div>
<div class="t" style="left:1210.52px;top:711.84px;font-size:12px;line-height:16px;color:#333;letter-spacing:-0.1px;">No</div>
<div class="r" style="left:1288px;top:705.5px;width:1px;height:27.0px;background:#f6f7f7;"></div>
<div class="r" style="left:1350px;top:715.3px;width:8px;height:8px;background:#f00000;"></div>
<div class="t" style="left:1360.69px;top:711.84px;font-size:12px;line-height:16px;color:#333;letter-spacing:-0.1px;">No</div>
<div class="r" style="left:1438px;top:705.5px;width:1px;height:27.0px;background:#f6f7f7;"></div>
<div class="r" style="left:1500px;top:715.3px;width:8px;height:8px;background:#f00000;"></div>
<div class="t" style="left:1510.87px;top:711.84px;font-size:12px;line-height:16px;color:#333;letter-spacing:-0.1px;">No</div>
<div class="r" style="left:1588px;top:705.5px;width:1px;height:27.0px;background:#f6f7f7;"></div>
<div class="r" style="left:1650px;top:715.3px;width:8px;height:8px;background:#f00000;"></div>
<div class="t" style="left:1661.03px;top:711.84px;font-size:12px;line-height:16px;color:#333;letter-spacing:-0.1px;">No</div>
<div class="r" style="left:1738px;top:705.5px;width:1px;height:27.0px;background:#f6f7f7;"></div>
<div class="r" style="left:1803px;top:715.3px;width:8px;height:8px;background:#0a7d0a;"></div>
<div class="t" style="left:1812.90px;top:711.84px;font-size:12px;line-height:16px;color:#111;font-weight:bold;letter-spacing:-0.5px;">Sí</div>
<div class="r" style="left:389px;top:759px;width:1497px;height:1px;background:#dfe6e8;"></div>
<div class="t" style="left:392.00px;top:738.84px;font-size:12px;line-height:16px;color:#2e3440;letter-spacing:0.34px;">Gestión de Riesgos y Cumplimiento Normativo</div>
<div class="r" style="left:837px;top:732.5px;width:1px;height:27.0px;background:#f6f7f7;"></div>
<div class="r" style="left:899px;top:742.3px;width:8px;height:8px;background:#f00000;"></div>
<div class="t" style="left:910.18px;top:738.84px;font-size:12px;line-height:16px;color:#333;letter-spacing:-0.1px;">No</div>
<div class="r" style="left:987px;top:732.5px;width:1px;height:27.0px;background:#f6f7f7;"></div>
<div class="r" style="left:1050px;top:742.3px;width:8px;height:8px;background:#f00000;"></div>
<div class="t" style="left:1060.35px;top:738.84px;font-size:12px;line-height:16px;color:#333;letter-spacing:-0.1px;">No</div>
<div class="r" style="left:1138px;top:732.5px;width:1px;height:27.0px;background:#f6f7f7;"></div>
<div class="r" style="left:1200px;top:742.3px;width:8px;height:8px;background:#f00000;"></div>
<div class="t" style="left:1210.52px;top:738.84px;font-size:12px;line-height:16px;color:#333;letter-spacing:-0.1px;">No</div>
<div class="r" style="left:1288px;top:732.5px;width:1px;height:27.0px;background:#f6f7f7;"></div>
<div class="r" style="left:1350px;top:742.3px;width:8px;height:8px;background:#f00000;"></div>
<div class="t" style="left:1360.69px;top:738.84px;font-size:12px;line-height:16px;color:#333;letter-spacing:-0.1px;">No</div>
<div class="r" style="left:1438px;top:732.5px;width:1px;height:27.0px;background:#f6f7f7;"></div>
<div class="r" style="left:1500px;top:742.3px;width:8px;height:8px;background:#f00000;"></div>
<div class="t" style="left:1510.87px;top:738.84px;font-size:12px;line-height:16px;color:#333;letter-spacing:-0.1px;">No</div>
<div class="r" style="left:1588px;top:732.5px;width:1px;height:27.0px;background:#f6f7f7;"></div>
<div class="r" style="left:1650px;top:742.3px;width:8px;height:8px;background:#f00000;"></div>
<div class="t" style="left:1661.03px;top:738.84px;font-size:12px;line-height:16px;color:#333;letter-spacing:-0.1px;">No</div>
<div class="r" style="left:1738px;top:732.5px;width:1px;height:27.0px;background:#f6f7f7;"></div>
<div class="r" style="left:1803px;top:742.3px;width:8px;height:8px;background:#0a7d0a;"></div>
<div class="t" style="left:1812.90px;top:738.84px;font-size:12px;line-height:16px;color:#111;font-weight:bold;letter-spacing:-0.5px;">Sí</div>
<div class="r" style="left:389px;top:786px;width:1497px;height:1px;background:#dfe6e8;"></div>
<div class="t" style="left:392.00px;top:765.84px;font-size:12px;line-height:16px;color:#2e3440;letter-spacing:0.34px;">Ética y Responsabilidad Social</div>
<div class="r" style="left:837px;top:759.5px;width:1px;height:27.0px;background:#f6f7f7;"></div>
<div class="r" style="left:899px;top:769.3px;width:8px;height:8px;background:#f00000;"></div>
<div class="t" style="left:910.18px;top:765.84px;font-size:12px;line-height:16px;color:#333;letter-spacing:-0.1px;">No</div>
<div class="r" style="left:987px;top:759.5px;width:1px;height:27.0px;background:#f6f7f7;"></div>
<div class="r" style="left:1050px;top:769.3px;width:8px;height:8px;background:#f00000;"></div>
<div class="t" style="left:1060.35px;top:765.84px;font-size:12px;line-height:16px;color:#333;letter-spacing:-0.1px;">No</div>
<div class="r" style="left:1138px;top:759.5px;width:1px;height:27.0px;background:#f6f7f7;"></div>
<div class="r" style="left:1200px;top:769.3px;width:8px;height:8px;background:#f00000;"></div>
<div class="t" style="left:1210.52px;top:765.84px;font-size:12px;line-height:16px;color:#333;letter-spacing:-0.1px;">No</div>
<div class="r" style="left:1288px;top:759.5px;width:1px;height:27.0px;background:#f6f7f7;"></div>
<div class="r" style="left:1350px;top:769.3px;width:8px;height:8px;background:#f00000;"></div>
<div class="t" style="left:1360.69px;top:765.84px;font-size:12px;line-height:16px;color:#333;letter-spacing:-0.1px;">No</div>
<div class="r" style="left:1438px;top:759.5px;width:1px;height:27.0px;background:#f6f7f7;"></div>
<div class="r" style="left:1500px;top:769.3px;width:8px;height:8px;background:#f00000;"></div>
<div class="t" style="left:1510.87px;top:765.84px;font-size:12px;line-height:16px;color:#333;letter-spacing:-0.1px;">No</div>
<div class="r" style="left:1588px;top:759.5px;width:1px;height:27.0px;background:#f6f7f7;"></div>
<div class="r" style="left:1650px;top:769.3px;width:8px;height:8px;background:#f00000;"></div>
<div class="t" style="left:1661.03px;top:765.84px;font-size:12px;line-height:16px;color:#333;letter-spacing:-0.1px;">No</div>
<div class="r" style="left:1738px;top:759.5px;width:1px;height:27.0px;background:#f6f7f7;"></div>
<div class="r" style="left:1803px;top:769.3px;width:8px;height:8px;background:#0a7d0a;"></div>
<div class="t" style="left:1812.90px;top:765.84px;font-size:12px;line-height:16px;color:#111;font-weight:bold;letter-spacing:-0.5px;">Sí</div>
<svg style="left:395px;top:789px" width="9" height="11" viewBox="0 0 9 11"><path d="M8 0.6 V10.4 L0.8 5.5 Z" fill="#8a8a8a" stroke="#8a8a8a" stroke-width="1" stroke-linejoin="round"/></svg>
<div class="r" style="left:411px;top:790px;width:1017px;height:9px;background:#8a8a8a;border-radius:4.5px;"></div>
<svg style="left:1858px;top:789px" width="9" height="11" viewBox="0 0 9 11"><path d="M1 0.6 V10.4 L8.2 5.5 Z" fill="#8a8a8a" stroke="#8a8a8a" stroke-width="1" stroke-linejoin="round"/></svg>
<div class="r" style="left:225px;top:805.5px;width:159px;height:305px;background:#eff3f4;"></div>
<div class="t" style="left:179.50px;top:809.84px;font-size:12px;line-height:16px;color:#363b44;font-weight:bold;letter-spacing:-0.2px;width:200px;text-align:right;">Visibilidad Dimensiones en</div>
<div class="t" style="left:179.50px;top:826.84px;font-size:12px;line-height:16px;color:#363b44;font-weight:bold;width:200px;text-align:right;">Tablas</div>
<svg style="left:364px;top:843px" width="16" height="16" viewBox="0 0 16 16"><defs><linearGradient id="hg364843" x1="0" y1="0" x2="0" y2="1"><stop offset="0" stop-color="#9cc4f2"/><stop offset="0.45" stop-color="#4f8ad8"/><stop offset="1" stop-color="#2a62c6"/></linearGradient></defs><circle cx="8" cy="8" r="7.5" fill="url(#hg364843)" stroke="#2447a6" stroke-width="0.9"/><text x="8" y="12.3" font-family="Liberation Sans" font-weight="bold" font-size="11.5" fill="#fff" text-anchor="middle">?</text></svg>
<div class="r" style="left:387px;top:806px;width:1505px;height:302px;background:#fff;border:1px solid #a9c0d6;"></div>
<div class="r" style="left:388px;top:807px;width:1502px;height:32.5px;background:#fafafa;"></div>
<div class="t" style="left:463.00px;top:814.84px;font-size:12px;line-height:16px;color:#1f2937;font-weight:bold;letter-spacing:-0.06px;width:300px;text-align:center;">Dimensiones/Opciones</div>
<div class="r" style="left:838px;top:807px;width:1px;height:32.5px;background:#d8e0e3;"></div>
<div class="t" style="left:838.30px;top:814.84px;font-size:12px;line-height:16px;color:#1f2937;font-weight:bold;letter-spacing:0.05px;width:150.2px;text-align:center;">Elemento</div>
<div class="r" style="left:988px;top:807px;width:1px;height:32.5px;background:#d8e0e3;"></div>
<div class="t" style="left:988.50px;top:814.84px;font-size:12px;line-height:16px;color:#1f2937;font-weight:bold;letter-spacing:0.05px;width:150.2px;text-align:center;">ENS</div>
<div class="r" style="left:1139px;top:807px;width:1px;height:32.5px;background:#d8e0e3;"></div>
<div class="t" style="left:1138.70px;top:814.84px;font-size:12px;line-height:16px;color:#1f2937;font-weight:bold;letter-spacing:-0.2px;width:150.2px;text-align:center;">Evaluación de Riesgos</div>
<div class="r" style="left:1289px;top:807px;width:1px;height:32.5px;background:#d8e0e3;"></div>
<div class="t" style="left:1288.90px;top:814.84px;font-size:12px;line-height:16px;color:#1f2937;font-weight:bold;letter-spacing:0.05px;width:150.2px;text-align:center;">Equipos</div>
<div class="r" style="left:1439px;top:807px;width:1px;height:32.5px;background:#d8e0e3;"></div>
<div class="t" style="left:1439.10px;top:814.84px;font-size:12px;line-height:16px;color:#1f2937;font-weight:bold;letter-spacing:0.05px;width:150.2px;text-align:center;">Proveedores</div>
<div class="r" style="left:1589px;top:807px;width:1px;height:32.5px;background:#d8e0e3;"></div>
<div class="t" style="left:1589.30px;top:814.84px;font-size:12px;line-height:16px;color:#1f2937;font-weight:bold;letter-spacing:0.05px;width:150.2px;text-align:center;">Tratamiento</div>
<div class="r" style="left:389px;top:839px;width:1351px;height:1px;background:#d5dee1;"></div>
<div class="r" style="left:1740px;top:840px;width:1150px;height:1px;background:#e6ecee;"></div>
<div class="r" style="left:389px;top:840px;width:1351px;height:24.399999999999977px;background:#fafafa;"></div>
<div class="r" style="left:389px;top:864.4px;width:1351px;height:27.0px;background:#fff;"></div>
<div class="r" style="left:389px;top:891.4px;width:1351px;height:27.0px;background:#fafafa;"></div>
<div class="r" style="left:389px;top:918.4px;width:1351px;height:27.0px;background:#fff;"></div>
<div class="r" style="left:389px;top:945.4px;width:1351px;height:27.0px;background:#fafafa;"></div>
<div class="r" style="left:389px;top:972.4px;width:1351px;height:27.0px;background:#fff;"></div>
<div class="r" style="left:389px;top:999.4px;width:1351px;height:27.000000000000114px;background:#fafafa;"></div>
<div class="r" style="left:389px;top:1026.4px;width:1351px;height:27.0px;background:#fff;"></div>
<div class="r" style="left:389px;top:1053.4px;width:1351px;height:27.0px;background:#fafafa;"></div>
<div class="r" style="left:389px;top:1080.4px;width:1351px;height:27.0px;background:#fff;"></div>
<div class="r" style="left:389px;top:864px;width:1351px;height:1px;background:#dfe6e8;"></div>
<div class="t" style="left:392.00px;top:843.74px;font-size:12px;line-height:16px;color:#2e3440;letter-spacing:0.34px;">Origen, creencias e ideológicos</div>
<div class="r" style="left:837px;top:840px;width:1px;height:24.399999999999977px;background:#f6f7f7;"></div>
<div class="r" style="left:903px;top:847.1999999999999px;width:8px;height:8px;background:#0a7d0a;"></div>
<div class="t" style="left:912.90px;top:843.74px;font-size:12px;line-height:16px;color:#111;font-weight:bold;letter-spacing:-0.5px;">Sí</div>
<div class="r" style="left:987px;top:840px;width:1px;height:24.399999999999977px;background:#f6f7f7;"></div>
<div class="r" style="left:1052px;top:847.1999999999999px;width:8px;height:8px;background:#f00000;"></div>
<div class="t" style="left:1061.40px;top:843.74px;font-size:12px;line-height:16px;color:#333;letter-spacing:-0.1px;">No</div>
<div class="r" style="left:1138px;top:840px;width:1px;height:24.399999999999977px;background:#f6f7f7;"></div>
<div class="r" style="left:1202px;top:847.1999999999999px;width:8px;height:8px;background:#f00000;"></div>
<div class="t" style="left:1211.60px;top:843.74px;font-size:12px;line-height:16px;color:#333;letter-spacing:-0.1px;">No</div>
<div class="r" style="left:1288px;top:840px;width:1px;height:24.399999999999977px;background:#f6f7f7;"></div>
<div class="r" style="left:1352px;top:847.1999999999999px;width:8px;height:8px;background:#f00000;"></div>
<div class="t" style="left:1361.80px;top:843.74px;font-size:12px;line-height:16px;color:#333;letter-spacing:-0.1px;">No</div>
<div class="r" style="left:1438px;top:840px;width:1px;height:24.399999999999977px;background:#f6f7f7;"></div>
<div class="r" style="left:1502px;top:847.1999999999999px;width:8px;height:8px;background:#f00000;"></div>
<div class="t" style="left:1512.00px;top:843.74px;font-size:12px;line-height:16px;color:#333;letter-spacing:-0.1px;">No</div>
<div class="r" style="left:1588px;top:840px;width:1px;height:24.399999999999977px;background:#f6f7f7;"></div>
<div class="r" style="left:1652px;top:847.1999999999999px;width:8px;height:8px;background:#f00000;"></div>
<div class="t" style="left:1662.20px;top:843.74px;font-size:12px;line-height:16px;color:#333;letter-spacing:-0.1px;">No</div>
<div class="r" style="left:389px;top:891px;width:1351px;height:1px;background:#dfe6e8;"></div>
<div class="t" style="left:392.00px;top:870.74px;font-size:12px;line-height:16px;color:#2e3440;letter-spacing:0.34px;">Salud</div>
<div class="r" style="left:837px;top:864.4px;width:1px;height:27.0px;background:#f6f7f7;"></div>
<div class="r" style="left:903px;top:874.1999999999999px;width:8px;height:8px;background:#0a7d0a;"></div>
<div class="t" style="left:912.90px;top:870.74px;font-size:12px;line-height:16px;color:#111;font-weight:bold;letter-spacing:-0.5px;">Sí</div>
<div class="r" style="left:987px;top:864.4px;width:1px;height:27.0px;background:#f6f7f7;"></div>
<div class="r" style="left:1052px;top:874.1999999999999px;width:8px;height:8px;background:#f00000;"></div>
<div class="t" style="left:1061.40px;top:870.74px;font-size:12px;line-height:16px;color:#333;letter-spacing:-0.1px;">No</div>
<div class="r" style="left:1138px;top:864.4px;width:1px;height:27.0px;background:#f6f7f7;"></div>
<div class="r" style="left:1202px;top:874.1999999999999px;width:8px;height:8px;background:#f00000;"></div>
<div class="t" style="left:1211.60px;top:870.74px;font-size:12px;line-height:16px;color:#333;letter-spacing:-0.1px;">No</div>
<div class="r" style="left:1288px;top:864.4px;width:1px;height:27.0px;background:#f6f7f7;"></div>
<div class="r" style="left:1352px;top:874.1999999999999px;width:8px;height:8px;background:#f00000;"></div>
<div class="t" style="left:1361.80px;top:870.74px;font-size:12px;line-height:16px;color:#333;letter-spacing:-0.1px;">No</div>
<div class="r" style="left:1438px;top:864.4px;width:1px;height:27.0px;background:#f6f7f7;"></div>
<div class="r" style="left:1502px;top:874.1999999999999px;width:8px;height:8px;background:#f00000;"></div>
<div class="t" style="left:1512.00px;top:870.74px;font-size:12px;line-height:16px;color:#333;letter-spacing:-0.1px;">No</div>
<div class="r" style="left:1588px;top:864.4px;width:1px;height:27.0px;background:#f6f7f7;"></div>
<div class="r" style="left:1652px;top:874.1999999999999px;width:8px;height:8px;background:#f00000;"></div>
<div class="t" style="left:1662.20px;top:870.74px;font-size:12px;line-height:16px;color:#333;letter-spacing:-0.1px;">No</div>
<div class="r" style="left:389px;top:918px;width:1351px;height:1px;background:#dfe6e8;"></div>
<div class="t" style="left:392.00px;top:897.74px;font-size:12px;line-height:16px;color:#2e3440;letter-spacing:0.34px;">Titulares de alto riesgo</div>
<div class="r" style="left:837px;top:891.4px;width:1px;height:27.0px;background:#f6f7f7;"></div>
<div class="r" style="left:903px;top:901.1999999999999px;width:8px;height:8px;background:#0a7d0a;"></div>
<div class="t" style="left:912.90px;top:897.74px;font-size:12px;line-height:16px;color:#111;font-weight:bold;letter-spacing:-0.5px;">Sí</div>
<div class="r" style="left:987px;top:891.4px;width:1px;height:27.0px;background:#f6f7f7;"></div>
<div class="r" style="left:1052px;top:901.1999999999999px;width:8px;height:8px;background:#f00000;"></div>
<div class="t" style="left:1061.40px;top:897.74px;font-size:12px;line-height:16px;color:#333;letter-spacing:-0.1px;">No</div>
<div class="r" style="left:1138px;top:891.4px;width:1px;height:27.0px;background:#f6f7f7;"></div>
<div class="r" style="left:1202px;top:901.1999999999999px;width:8px;height:8px;background:#f00000;"></div>
<div class="t" style="left:1211.60px;top:897.74px;font-size:12px;line-height:16px;color:#333;letter-spacing:-0.1px;">No</div>
<div class="r" style="left:1288px;top:891.4px;width:1px;height:27.0px;background:#f6f7f7;"></div>
<div class="r" style="left:1352px;top:901.1999999999999px;width:8px;height:8px;background:#f00000;"></div>
<div class="t" style="left:1361.80px;top:897.74px;font-size:12px;line-height:16px;color:#333;letter-spacing:-0.1px;">No</div>
<div class="r" style="left:1438px;top:891.4px;width:1px;height:27.0px;background:#f6f7f7;"></div>
<div class="r" style="left:1502px;top:901.1999999999999px;width:8px;height:8px;background:#f00000;"></div>
<div class="t" style="left:1512.00px;top:897.74px;font-size:12px;line-height:16px;color:#333;letter-spacing:-0.1px;">No</div>
<div class="r" style="left:1588px;top:891.4px;width:1px;height:27.0px;background:#f6f7f7;"></div>
<div class="r" style="left:1652px;top:901.1999999999999px;width:8px;height:8px;background:#f00000;"></div>
<div class="t" style="left:1662.20px;top:897.74px;font-size:12px;line-height:16px;color:#333;letter-spacing:-0.1px;">No</div>
<div class="r" style="left:389px;top:945px;width:1351px;height:1px;background:#dfe6e8;"></div>
<div class="t" style="left:392.00px;top:924.74px;font-size:12px;line-height:16px;color:#2e3440;letter-spacing:0.34px;">Información adicional de tarjeta bancaria</div>
<div class="r" style="left:837px;top:918.4px;width:1px;height:27.0px;background:#f6f7f7;"></div>
<div class="r" style="left:903px;top:928.1999999999999px;width:8px;height:8px;background:#0a7d0a;"></div>
<div class="t" style="left:912.90px;top:924.74px;font-size:12px;line-height:16px;color:#111;font-weight:bold;letter-spacing:-0.5px;">Sí</div>
<div class="r" style="left:987px;top:918.4px;width:1px;height:27.0px;background:#f6f7f7;"></div>
<div class="r" style="left:1052px;top:928.1999999999999px;width:8px;height:8px;background:#f00000;"></div>
<div class="t" style="left:1061.40px;top:924.74px;font-size:12px;line-height:16px;color:#333;letter-spacing:-0.1px;">No</div>
<div class="r" style="left:1138px;top:918.4px;width:1px;height:27.0px;background:#f6f7f7;"></div>
<div class="r" style="left:1202px;top:928.1999999999999px;width:8px;height:8px;background:#f00000;"></div>
<div class="t" style="left:1211.60px;top:924.74px;font-size:12px;line-height:16px;color:#333;letter-spacing:-0.1px;">No</div>
<div class="r" style="left:1288px;top:918.4px;width:1px;height:27.0px;background:#f6f7f7;"></div>
<div class="r" style="left:1352px;top:928.1999999999999px;width:8px;height:8px;background:#f00000;"></div>
<div class="t" style="left:1361.80px;top:924.74px;font-size:12px;line-height:16px;color:#333;letter-spacing:-0.1px;">No</div>
<div class="r" style="left:1438px;top:918.4px;width:1px;height:27.0px;background:#f6f7f7;"></div>
<div class="r" style="left:1502px;top:928.1999999999999px;width:8px;height:8px;background:#f00000;"></div>
<div class="t" style="left:1512.00px;top:924.74px;font-size:12px;line-height:16px;color:#333;letter-spacing:-0.1px;">No</div>
<div class="r" style="left:1588px;top:918.4px;width:1px;height:27.0px;background:#f6f7f7;"></div>
<div class="r" style="left:1652px;top:928.1999999999999px;width:8px;height:8px;background:#f00000;"></div>
<div class="t" style="left:1662.20px;top:924.74px;font-size:12px;line-height:16px;color:#333;letter-spacing:-0.1px;">No</div>
<div class="r" style="left:389px;top:972px;width:1351px;height:1px;background:#dfe6e8;"></div>
<div class="t" style="left:392.00px;top:951.74px;font-size:12px;line-height:16px;color:#2e3440;letter-spacing:0.34px;">Ubicación en conjunto con patrimoniales</div>
<div class="r" style="left:837px;top:945.4px;width:1px;height:27.0px;background:#f6f7f7;"></div>
<div class="r" style="left:903px;top:955.1999999999999px;width:8px;height:8px;background:#0a7d0a;"></div>
<div class="t" style="left:912.90px;top:951.74px;font-size:12px;line-height:16px;color:#111;font-weight:bold;letter-spacing:-0.5px;">Sí</div>
<div class="r" style="left:987px;top:945.4px;width:1px;height:27.0px;background:#f6f7f7;"></div>
<div class="r" style="left:1052px;top:955.1999999999999px;width:8px;height:8px;background:#f00000;"></div>
<div class="t" style="left:1061.40px;top:951.74px;font-size:12px;line-height:16px;color:#333;letter-spacing:-0.1px;">No</div>
<div class="r" style="left:1138px;top:945.4px;width:1px;height:27.0px;background:#f6f7f7;"></div>
<div class="r" style="left:1202px;top:955.1999999999999px;width:8px;height:8px;background:#f00000;"></div>
<div class="t" style="left:1211.60px;top:951.74px;font-size:12px;line-height:16px;color:#333;letter-spacing:-0.1px;">No</div>
<div class="r" style="left:1288px;top:945.4px;width:1px;height:27.0px;background:#f6f7f7;"></div>
<div class="r" style="left:1352px;top:955.1999999999999px;width:8px;height:8px;background:#f00000;"></div>
<div class="t" style="left:1361.80px;top:951.74px;font-size:12px;line-height:16px;color:#333;letter-spacing:-0.1px;">No</div>
<div class="r" style="left:1438px;top:945.4px;width:1px;height:27.0px;background:#f6f7f7;"></div>
<div class="r" style="left:1502px;top:955.1999999999999px;width:8px;height:8px;background:#f00000;"></div>
<div class="t" style="left:1512.00px;top:951.74px;font-size:12px;line-height:16px;color:#333;letter-spacing:-0.1px;">No</div>
<div class="r" style="left:1588px;top:945.4px;width:1px;height:27.0px;background:#f6f7f7;"></div>
<div class="r" style="left:1652px;top:955.1999999999999px;width:8px;height:8px;background:#f00000;"></div>
<div class="t" style="left:1662.20px;top:951.74px;font-size:12px;line-height:16px;color:#333;letter-spacing:-0.1px;">No</div>
<div class="r" style="left:389px;top:999px;width:1351px;height:1px;background:#dfe6e8;"></div>
<div class="t" style="left:392.00px;top:978.74px;font-size:12px;line-height:16px;color:#2e3440;letter-spacing:0.34px;">Riesgo Inherente</div>
<div class="r" style="left:837px;top:972.4px;width:1px;height:27.0px;background:#f6f7f7;"></div>
<div class="r" style="left:903px;top:982.1999999999999px;width:8px;height:8px;background:#0a7d0a;"></div>
<div class="t" style="left:912.90px;top:978.74px;font-size:12px;line-height:16px;color:#111;font-weight:bold;letter-spacing:-0.5px;">Sí</div>
<div class="r" style="left:987px;top:972.4px;width:1px;height:27.0px;background:#f6f7f7;"></div>
<div class="r" style="left:1052px;top:982.1999999999999px;width:8px;height:8px;background:#f00000;"></div>
<div class="t" style="left:1061.40px;top:978.74px;font-size:12px;line-height:16px;color:#333;letter-spacing:-0.1px;">No</div>
<div class="r" style="left:1138px;top:972.4px;width:1px;height:27.0px;background:#f6f7f7;"></div>
<div class="r" style="left:1202px;top:982.1999999999999px;width:8px;height:8px;background:#f00000;"></div>
<div class="t" style="left:1211.60px;top:978.74px;font-size:12px;line-height:16px;color:#333;letter-spacing:-0.1px;">No</div>
<div class="r" style="left:1288px;top:972.4px;width:1px;height:27.0px;background:#f6f7f7;"></div>
<div class="r" style="left:1352px;top:982.1999999999999px;width:8px;height:8px;background:#f00000;"></div>
<div class="t" style="left:1361.80px;top:978.74px;font-size:12px;line-height:16px;color:#333;letter-spacing:-0.1px;">No</div>
<div class="r" style="left:1438px;top:972.4px;width:1px;height:27.0px;background:#f6f7f7;"></div>
<div class="r" style="left:1502px;top:982.1999999999999px;width:8px;height:8px;background:#f00000;"></div>
<div class="t" style="left:1512.00px;top:978.74px;font-size:12px;line-height:16px;color:#333;letter-spacing:-0.1px;">No</div>
<div class="r" style="left:1588px;top:972.4px;width:1px;height:27.0px;background:#f6f7f7;"></div>
<div class="r" style="left:1652px;top:982.1999999999999px;width:8px;height:8px;background:#f00000;"></div>
<div class="t" style="left:1662.20px;top:978.74px;font-size:12px;line-height:16px;color:#333;letter-spacing:-0.1px;">No</div>
<div class="r" style="left:389px;top:1026px;width:1351px;height:1px;background:#dfe6e8;"></div>
<div class="t" style="left:392.00px;top:1005.74px;font-size:12px;line-height:16px;color:#2e3440;letter-spacing:0.34px;">Calidad del Producto/Servicio</div>
<div class="r" style="left:837px;top:999.4px;width:1px;height:27.000000000000114px;background:#f6f7f7;"></div>
<div class="r" style="left:901px;top:1009.1999999999999px;width:8px;height:8px;background:#f00000;"></div>
<div class="t" style="left:911.20px;top:1005.74px;font-size:12px;line-height:16px;color:#333;letter-spacing:-0.1px;">No</div>
<div class="r" style="left:987px;top:999.4px;width:1px;height:27.000000000000114px;background:#f6f7f7;"></div>
<div class="r" style="left:1052px;top:1009.1999999999999px;width:8px;height:8px;background:#f00000;"></div>
<div class="t" style="left:1061.40px;top:1005.74px;font-size:12px;line-height:16px;color:#333;letter-spacing:-0.1px;">No</div>
<div class="r" style="left:1138px;top:999.4px;width:1px;height:27.000000000000114px;background:#f6f7f7;"></div>
<div class="r" style="left:1202px;top:1009.1999999999999px;width:8px;height:8px;background:#f00000;"></div>
<div class="t" style="left:1211.60px;top:1005.74px;font-size:12px;line-height:16px;color:#333;letter-spacing:-0.1px;">No</div>
<div class="r" style="left:1288px;top:999.4px;width:1px;height:27.000000000000114px;background:#f6f7f7;"></div>
<div class="r" style="left:1352px;top:1009.1999999999999px;width:8px;height:8px;background:#f00000;"></div>
<div class="t" style="left:1361.80px;top:1005.74px;font-size:12px;line-height:16px;color:#333;letter-spacing:-0.1px;">No</div>
<div class="r" style="left:1438px;top:999.4px;width:1px;height:27.000000000000114px;background:#f6f7f7;"></div>
<div class="r" style="left:1504px;top:1009.1999999999999px;width:8px;height:8px;background:#0a7d0a;"></div>
<div class="t" style="left:1513.70px;top:1005.74px;font-size:12px;line-height:16px;color:#111;font-weight:bold;letter-spacing:-0.5px;">Sí</div>
<div class="r" style="left:1588px;top:999.4px;width:1px;height:27.000000000000114px;background:#f6f7f7;"></div>
<div class="r" style="left:1652px;top:1009.1999999999999px;width:8px;height:8px;background:#f00000;"></div>
<div class="t" style="left:1662.20px;top:1005.74px;font-size:12px;line-height:16px;color:#333;letter-spacing:-0.1px;">No</div>
<div class="r" style="left:389px;top:1053px;width:1351px;height:1px;background:#dfe6e8;"></div>
<div class="t" style="left:392.00px;top:1032.74px;font-size:12px;line-height:16px;color:#2e3440;letter-spacing:0.34px;">Fiabilidad</div>
<div class="r" style="left:837px;top:1026.4px;width:1px;height:27.0px;background:#f6f7f7;"></div>
<div class="r" style="left:901px;top:1036.2px;width:8px;height:8px;background:#f00000;"></div>
<div class="t" style="left:911.20px;top:1032.74px;font-size:12px;line-height:16px;color:#333;letter-spacing:-0.1px;">No</div>
<div class="r" style="left:987px;top:1026.4px;width:1px;height:27.0px;background:#f6f7f7;"></div>
<div class="r" style="left:1052px;top:1036.2px;width:8px;height:8px;background:#f00000;"></div>
<div class="t" style="left:1061.40px;top:1032.74px;font-size:12px;line-height:16px;color:#333;letter-spacing:-0.1px;">No</div>
<div class="r" style="left:1138px;top:1026.4px;width:1px;height:27.0px;background:#f6f7f7;"></div>
<div class="r" style="left:1202px;top:1036.2px;width:8px;height:8px;background:#f00000;"></div>
<div class="t" style="left:1211.60px;top:1032.74px;font-size:12px;line-height:16px;color:#333;letter-spacing:-0.1px;">No</div>
<div class="r" style="left:1288px;top:1026.4px;width:1px;height:27.0px;background:#f6f7f7;"></div>
<div class="r" style="left:1352px;top:1036.2px;width:8px;height:8px;background:#f00000;"></div>
<div class="t" style="left:1361.80px;top:1032.74px;font-size:12px;line-height:16px;color:#333;letter-spacing:-0.1px;">No</div>
<div class="r" style="left:1438px;top:1026.4px;width:1px;height:27.0px;background:#f6f7f7;"></div>
<div class="r" style="left:1504px;top:1036.2px;width:8px;height:8px;background:#0a7d0a;"></div>
<div class="t" style="left:1513.70px;top:1032.74px;font-size:12px;line-height:16px;color:#111;font-weight:bold;letter-spacing:-0.5px;">Sí</div>
<div class="r" style="left:1588px;top:1026.4px;width:1px;height:27.0px;background:#f6f7f7;"></div>
<div class="r" style="left:1652px;top:1036.2px;width:8px;height:8px;background:#f00000;"></div>
<div class="t" style="left:1662.20px;top:1032.74px;font-size:12px;line-height:16px;color:#333;letter-spacing:-0.1px;">No</div>
<div class="r" style="left:389px;top:1080px;width:1351px;height:1px;background:#dfe6e8;"></div>
<div class="t" style="left:392.00px;top:1059.74px;font-size:12px;line-height:16px;color:#2e3440;letter-spacing:0.34px;">Gestión de Riesgos y Cumplimiento Normativo</div>
<div class="r" style="left:837px;top:1053.4px;width:1px;height:27.0px;background:#f6f7f7;"></div>
<div class="r" style="left:901px;top:1063.2px;width:8px;height:8px;background:#f00000;"></div>
<div class="t" style="left:911.20px;top:1059.74px;font-size:12px;line-height:16px;color:#333;letter-spacing:-0.1px;">No</div>
<div class="r" style="left:987px;top:1053.4px;width:1px;height:27.0px;background:#f6f7f7;"></div>
<div class="r" style="left:1052px;top:1063.2px;width:8px;height:8px;background:#f00000;"></div>
<div class="t" style="left:1061.40px;top:1059.74px;font-size:12px;line-height:16px;color:#333;letter-spacing:-0.1px;">No</div>
<div class="r" style="left:1138px;top:1053.4px;width:1px;height:27.0px;background:#f6f7f7;"></div>
<div class="r" style="left:1202px;top:1063.2px;width:8px;height:8px;background:#f00000;"></div>
<div class="t" style="left:1211.60px;top:1059.74px;font-size:12px;line-height:16px;color:#333;letter-spacing:-0.1px;">No</div>
<div class="r" style="left:1288px;top:1053.4px;width:1px;height:27.0px;background:#f6f7f7;"></div>
<div class="r" style="left:1352px;top:1063.2px;width:8px;height:8px;background:#f00000;"></div>
<div class="t" style="left:1361.80px;top:1059.74px;font-size:12px;line-height:16px;color:#333;letter-spacing:-0.1px;">No</div>
<div class="r" style="left:1438px;top:1053.4px;width:1px;height:27.0px;background:#f6f7f7;"></div>
<div class="r" style="left:1504px;top:1063.2px;width:8px;height:8px;background:#0a7d0a;"></div>
<div class="t" style="left:1513.70px;top:1059.74px;font-size:12px;line-height:16px;color:#111;font-weight:bold;letter-spacing:-0.5px;">Sí</div>
<div class="r" style="left:1588px;top:1053.4px;width:1px;height:27.0px;background:#f6f7f7;"></div>
<div class="r" style="left:1652px;top:1063.2px;width:8px;height:8px;background:#f00000;"></div>
<div class="t" style="left:1662.20px;top:1059.74px;font-size:12px;line-height:16px;color:#333;letter-spacing:-0.1px;">No</div>
<div class="t" style="left:392.00px;top:1086.74px;font-size:12px;line-height:16px;color:#2e3440;letter-spacing:0.34px;">Ética y Responsabilidad Social</div>
<div class="r" style="left:837px;top:1080.4px;width:1px;height:27.0px;background:#f6f7f7;"></div>
<div class="r" style="left:901px;top:1090.2px;width:8px;height:8px;background:#f00000;"></div>
<div class="t" style="left:911.20px;top:1086.74px;font-size:12px;line-height:16px;color:#333;letter-spacing:-0.1px;">No</div>
<div class="r" style="left:987px;top:1080.4px;width:1px;height:27.0px;background:#f6f7f7;"></div>
<div class="r" style="left:1052px;top:1090.2px;width:8px;height:8px;background:#f00000;"></div>
<div class="t" style="left:1061.40px;top:1086.74px;font-size:12px;line-height:16px;color:#333;letter-spacing:-0.1px;">No</div>
<div class="r" style="left:1138px;top:1080.4px;width:1px;height:27.0px;background:#f6f7f7;"></div>
<div class="r" style="left:1202px;top:1090.2px;width:8px;height:8px;background:#f00000;"></div>
<div class="t" style="left:1211.60px;top:1086.74px;font-size:12px;line-height:16px;color:#333;letter-spacing:-0.1px;">No</div>
<div class="r" style="left:1288px;top:1080.4px;width:1px;height:27.0px;background:#f6f7f7;"></div>
<div class="r" style="left:1352px;top:1090.2px;width:8px;height:8px;background:#f00000;"></div>
<div class="t" style="left:1361.80px;top:1086.74px;font-size:12px;line-height:16px;color:#333;letter-spacing:-0.1px;">No</div>
<div class="r" style="left:1438px;top:1080.4px;width:1px;height:27.0px;background:#f6f7f7;"></div>
<div class="r" style="left:1504px;top:1090.2px;width:8px;height:8px;background:#0a7d0a;"></div>
<div class="t" style="left:1513.70px;top:1086.74px;font-size:12px;line-height:16px;color:#111;font-weight:bold;letter-spacing:-0.5px;">Sí</div>
<div class="r" style="left:1588px;top:1080.4px;width:1px;height:27.0px;background:#f6f7f7;"></div>
<div class="r" style="left:1652px;top:1090.2px;width:8px;height:8px;background:#f00000;"></div>
<div class="t" style="left:1662.20px;top:1086.74px;font-size:12px;line-height:16px;color:#333;letter-spacing:-0.1px;">No</div>
<div class="r" style="left:1876px;top:840px;width:13px;height:267px;background:#fafafa;"></div>
<svg style="left:1878.5px;top:848px" width="10" height="9" viewBox="0 0 10 9"><path d="M0.8 8 H9.2 L5 0.8 Z" fill="#8a8a8a" stroke="#8a8a8a" stroke-width="1" stroke-linejoin="round"/></svg>
<div class="r" style="left:1879px;top:1065px;width:9px;height:20px;background:#8a8a8a;border-radius:4.5px;"></div>
<svg style="left:1878.5px;top:1093px" width="10" height="9" viewBox="0 0 10 9"><path d="M0.8 0.8 H9.2 L5 8 Z" fill="#8a8a8a" stroke="#8a8a8a" stroke-width="1" stroke-linejoin="round"/></svg>
<div class="r" style="left:223px;top:1120px;width:1674px;height:1px;background:#a9c0d6;"></div>
<div class="r" style="left:223px;top:1113px;width:266px;height:15px;background:#fff;"></div>
<svg style="left:228px;top:1116px" width="6" height="8" viewBox="0 0 6 8"><path d="M0 0 V7.6 L5.4 3.8 Z" fill="#a4a4a4"/></svg>
<div class="t" style="left:242.00px;top:1112.00px;font-size:13px;line-height:17px;color:#1f2937;font-weight:bold;letter-spacing:-0.05px;">Configuración de Campos de Controles</div>
<div class="r" style="left:222px;top:1135px;width:1675px;height:32px;background:#d3dbdd;border-top:1px solid #a9c0d6;border-bottom:1px solid #a9c0d6;border-right:1px solid #a9c0d6;border-left:1px solid #a9c0d6;"></div>
<svg style="left:233px;top:1144px" width="17" height="17" viewBox="0 0 17 17"><path d="M1.5 0.1 H12.7 L15.9 3.2 V14.3 A1.5 1.5 0 0 1 14.4 15.8 H1.6 A1.5 1.5 0 0 1 0.1 14.3 V1.6 A1.5 1.5 0 0 1 1.5 0.1 Z" fill="#232b39"/><rect x="1.9" y="1.9" width="9" height="3.45" fill="#d3dbdd"/><circle cx="8" cy="11.4" r="2.8" fill="#d3dbdd"/></svg>
<div class="t" style="left:257.00px;top:1142.04px;font-size:12px;line-height:16px;color:#2e3440;letter-spacing:0.28px;">Guardar</div>
<svg style="left:1813px;top:1143.5px" width="19" height="16" viewBox="0 0 19 16"><path d="M2.7 7.9 A6.6 6.6 0 0 1 11.67 1.74" fill="none" stroke="#232b39" stroke-width="2.3"/><path d="M0.2 7.1 L5.5 7.1 L2.6 11.6 Z" fill="#232b39"/><path d="M6.0 13.6 A6.6 6.6 0 0 0 15.85 7.4" fill="none" stroke="#232b39" stroke-width="2.3"/><path d="M12.9 7.8 L18.3 7.8 L15.6 3.9 Z" fill="#232b39"/></svg>
<div class="t" style="left:1838.00px;top:1142.04px;font-size:12px;line-height:16px;color:#2e3440;letter-spacing:0.18px;">Traducir</div>
<svg style="left:1395px;top:750px" width="80" height="90" viewBox="1395 750 80 90"><defs><filter id="sh" x="-30%" y="-30%" width="160%" height="160%"><feGaussianBlur in="SourceAlpha" stdDeviation="1.6"/><feOffset dx="1.5" dy="2.5"/><feComponentTransfer><feFuncA type="linear" slope="0.6"/></feComponentTransfer><feMerge><feMergeNode/><feMergeNode in="SourceGraphic"/></feMerge></filter></defs><g filter="url(#sh)"><path d="M1410.3 764.9 L1443.5 806" stroke="#4559f8" stroke-width="10.5" stroke-linecap="round"/><path d="M1432.8 815.4 L1455.6 796.5 L1462.9 829 Z" fill="#4559f8"/></g></svg>
<div class="r" style="left:1897px;top:0px;width:14px;height:1180px;background:#f8f8f8;"></div>
<svg style="left:1899px;top:7px" width="11" height="9" viewBox="0 0 11 9"><path d="M1 7.6 H10 L5.5 1 Z" fill="#8a8a8a" stroke="#8a8a8a" stroke-width="1" stroke-linejoin="round"/></svg>
<div class="r" style="left:1900px;top:23px;width:9px;height:1153px;background:#8a8a8a;border-radius:4.5px;"></div>
</body></html>
